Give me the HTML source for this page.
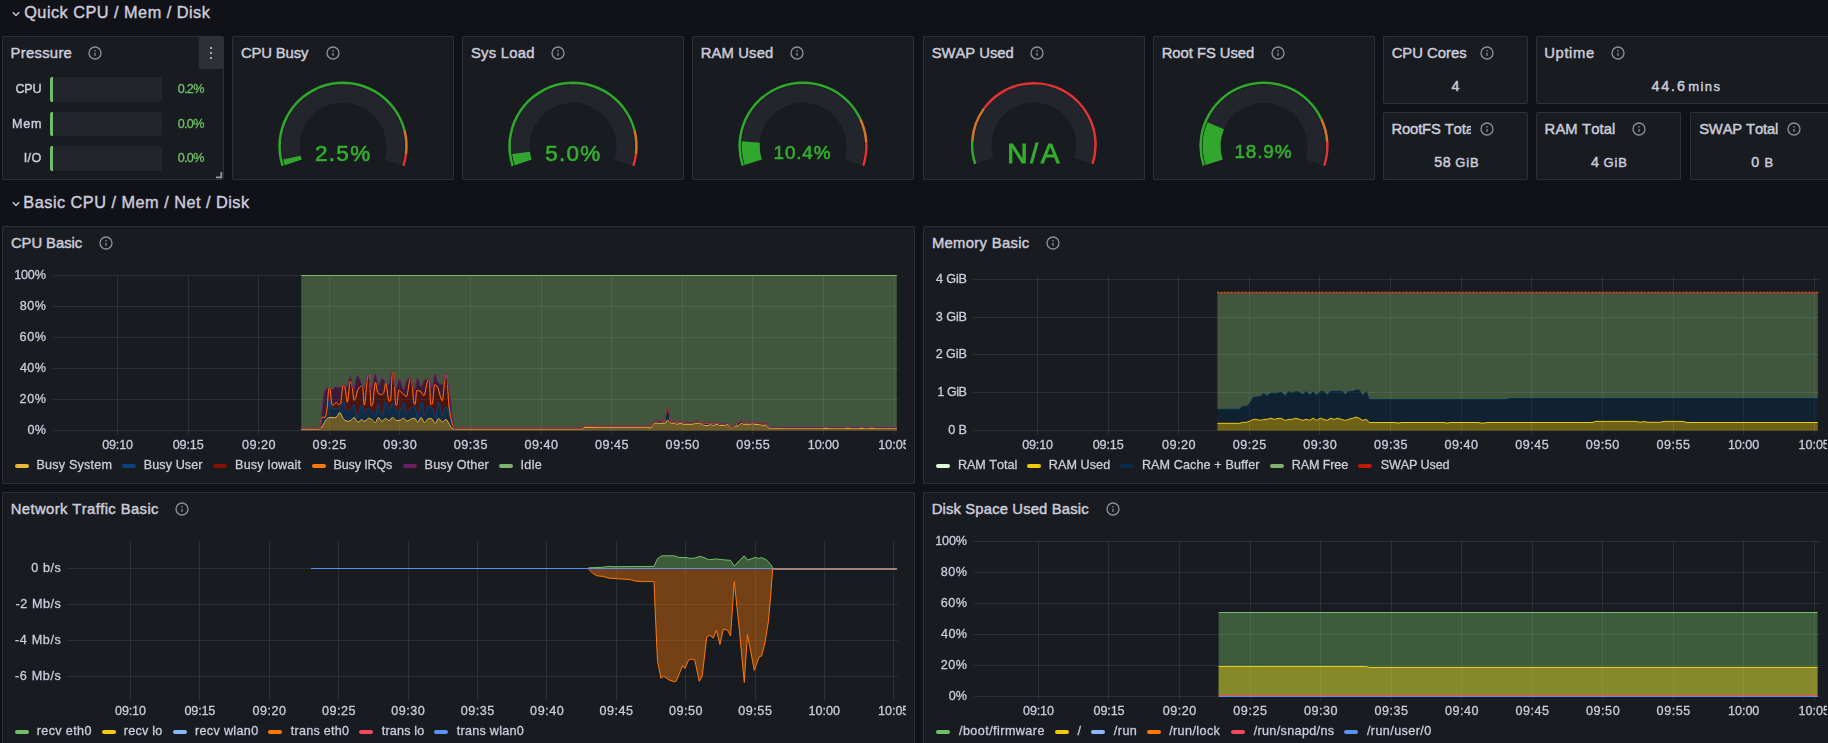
<!DOCTYPE html>
<html lang="en"><head><meta charset="utf-8"><title>Node Exporter Full - Grafana</title>
<style>
html,body{margin:0;padding:0;background:#111217;}
body{width:1828px;height:743px;overflow:hidden;position:relative;font-family:"Liberation Sans",sans-serif;font-kerning:none;}
.panel{position:absolute;box-sizing:border-box;background:#181b1f;border:1px solid rgba(204,204,220,0.12);border-radius:2px;}
.t{position:absolute;white-space:nowrap;font-kerning:none;margin:0;font-weight:400;}

.ic,.ov{position:absolute;display:block;}
.ov{left:0;top:0;pointer-events:none;}
.menubtn{position:absolute;background:rgba(204,204,220,0.12);border-radius:2px;}
.dot{position:absolute;width:2.2px;height:2.2px;border-radius:50%;background:rgb(204,204,220);}
.bar{position:absolute;background:#22252b;border-radius:2px;overflow:hidden;}
.tick{position:absolute;left:0;top:0;bottom:0;width:3.3px;background:#73BF69;}
.gl{position:absolute;left:0;top:0;width:1828px;height:743px;will-change:transform;}
.lm{position:absolute;height:4px;width:14px;border-radius:2px;}
</style></head>
<body>
<section class="panel" style="left:2px;top:36px;width:222px;height:144px"><h2 class="t ttl" style="left:7.49px;top:8px;font-size:14.80px;line-height:16px;color:rgb(204,204,220);letter-spacing:0.307px;-webkit-text-stroke:0.45px rgb(204,204,220);">Pressure</h2><svg class="ic" style="left:84.00px;top:8.00px" width="16" height="16" viewBox="0 0 24 24"><path fill="rgb(204,204,220)" fill-opacity="0.65" d="M12,2A10,10,0,1,0,22,12,10,10,0,0,0,12,2Zm0,18a8,8,0,1,1,8-8A8,8,0,0,1,12,20Zm0-8.5a1,1,0,0,0-1,1v3a1,1,0,0,0,2,0v-3A1,1,0,0,0,12,11.5Zm0-4a1.25,1.25,0,1,0,1.25,1.25A1.25,1.25,0,0,0,12,7.5Z"/></svg></section>
<section class="panel" style="left:232px;top:36px;width:222px;height:144px"><h2 class="t ttl" style="left:7.90px;top:8px;font-size:14.80px;line-height:16px;color:rgb(204,204,220);letter-spacing:-0.119px;-webkit-text-stroke:0.45px rgb(204,204,220);">CPU Busy</h2><svg class="ic" style="left:91.75px;top:8.00px" width="16" height="16" viewBox="0 0 24 24"><path fill="rgb(204,204,220)" fill-opacity="0.65" d="M12,2A10,10,0,1,0,22,12,10,10,0,0,0,12,2Zm0,18a8,8,0,1,1,8-8A8,8,0,0,1,12,20Zm0-8.5a1,1,0,0,0-1,1v3a1,1,0,0,0,2,0v-3A1,1,0,0,0,12,11.5Zm0-4a1.25,1.25,0,1,0,1.25,1.25A1.25,1.25,0,0,0,12,7.5Z"/></svg></section>
<section class="panel" style="left:462px;top:36px;width:222px;height:144px"><h2 class="t ttl" style="left:7.98px;top:8px;font-size:14.80px;line-height:16px;color:rgb(204,204,220);letter-spacing:0.260px;-webkit-text-stroke:0.45px rgb(204,204,220);">Sys Load</h2><svg class="ic" style="left:86.75px;top:8.00px" width="16" height="16" viewBox="0 0 24 24"><path fill="rgb(204,204,220)" fill-opacity="0.65" d="M12,2A10,10,0,1,0,22,12,10,10,0,0,0,12,2Zm0,18a8,8,0,1,1,8-8A8,8,0,0,1,12,20Zm0-8.5a1,1,0,0,0-1,1v3a1,1,0,0,0,2,0v-3A1,1,0,0,0,12,11.5Zm0-4a1.25,1.25,0,1,0,1.25,1.25A1.25,1.25,0,0,0,12,7.5Z"/></svg></section>
<section class="panel" style="left:692px;top:36px;width:222px;height:144px"><h2 class="t ttl" style="left:7.69px;top:8px;font-size:14.80px;line-height:16px;color:rgb(204,204,220);letter-spacing:0.145px;-webkit-text-stroke:0.45px rgb(204,204,220);">RAM Used</h2><svg class="ic" style="left:96.00px;top:8.00px" width="16" height="16" viewBox="0 0 24 24"><path fill="rgb(204,204,220)" fill-opacity="0.65" d="M12,2A10,10,0,1,0,22,12,10,10,0,0,0,12,2Zm0,18a8,8,0,1,1,8-8A8,8,0,0,1,12,20Zm0-8.5a1,1,0,0,0-1,1v3a1,1,0,0,0,2,0v-3A1,1,0,0,0,12,11.5Zm0-4a1.25,1.25,0,1,0,1.25,1.25A1.25,1.25,0,0,0,12,7.5Z"/></svg></section>
<section class="panel" style="left:923px;top:36px;width:222px;height:144px"><h2 class="t ttl" style="left:7.73px;top:8px;font-size:14.80px;line-height:16px;color:rgb(204,204,220);letter-spacing:-0.027px;-webkit-text-stroke:0.45px rgb(204,204,220);">SWAP Used</h2><svg class="ic" style="left:105.00px;top:8.00px" width="16" height="16" viewBox="0 0 24 24"><path fill="rgb(204,204,220)" fill-opacity="0.65" d="M12,2A10,10,0,1,0,22,12,10,10,0,0,0,12,2Zm0,18a8,8,0,1,1,8-8A8,8,0,0,1,12,20Zm0-8.5a1,1,0,0,0-1,1v3a1,1,0,0,0,2,0v-3A1,1,0,0,0,12,11.5Zm0-4a1.25,1.25,0,1,0,1.25,1.25A1.25,1.25,0,0,0,12,7.5Z"/></svg></section>
<section class="panel" style="left:1153px;top:36px;width:222px;height:144px"><h2 class="t ttl" style="left:7.69px;top:8px;font-size:14.80px;line-height:16px;color:rgb(204,204,220);letter-spacing:-0.035px;-webkit-text-stroke:0.45px rgb(204,204,220);">Root FS Used</h2><svg class="ic" style="left:116.00px;top:8.00px" width="16" height="16" viewBox="0 0 24 24"><path fill="rgb(204,204,220)" fill-opacity="0.65" d="M12,2A10,10,0,1,0,22,12,10,10,0,0,0,12,2Zm0,18a8,8,0,1,1,8-8A8,8,0,0,1,12,20Zm0-8.5a1,1,0,0,0-1,1v3a1,1,0,0,0,2,0v-3A1,1,0,0,0,12,11.5Zm0-4a1.25,1.25,0,1,0,1.25,1.25A1.25,1.25,0,0,0,12,7.5Z"/></svg></section>
<section class="panel" style="left:1383px;top:36px;width:145px;height:68px"><h2 class="t ttl" style="left:7.65px;top:8px;font-size:14.80px;line-height:16px;color:rgb(204,204,220);letter-spacing:0.012px;-webkit-text-stroke:0.45px rgb(204,204,220);">CPU Cores</h2><svg class="ic" style="left:95.00px;top:8.00px" width="16" height="16" viewBox="0 0 24 24"><path fill="rgb(204,204,220)" fill-opacity="0.65" d="M12,2A10,10,0,1,0,22,12,10,10,0,0,0,12,2Zm0,18a8,8,0,1,1,8-8A8,8,0,0,1,12,20Zm0-8.5a1,1,0,0,0-1,1v3a1,1,0,0,0,2,0v-3A1,1,0,0,0,12,11.5Zm0-4a1.25,1.25,0,1,0,1.25,1.25A1.25,1.25,0,0,0,12,7.5Z"/></svg></section>
<section class="panel" style="left:1536px;top:36px;width:299px;height:68px"><h2 class="t ttl" style="left:7.26px;top:8px;font-size:14.80px;line-height:16px;color:rgb(204,204,220);letter-spacing:0.614px;-webkit-text-stroke:0.45px rgb(204,204,220);">Uptime</h2><svg class="ic" style="left:73.00px;top:8.00px" width="16" height="16" viewBox="0 0 24 24"><path fill="rgb(204,204,220)" fill-opacity="0.65" d="M12,2A10,10,0,1,0,22,12,10,10,0,0,0,12,2Zm0,18a8,8,0,1,1,8-8A8,8,0,0,1,12,20Zm0-8.5a1,1,0,0,0-1,1v3a1,1,0,0,0,2,0v-3A1,1,0,0,0,12,11.5Zm0-4a1.25,1.25,0,1,0,1.25,1.25A1.25,1.25,0,0,0,12,7.5Z"/></svg></section>
<section class="panel" style="left:1383px;top:112px;width:145px;height:68px"><h2 class="t ttl" style="left:7.44px;top:8px;font-size:14.80px;line-height:16px;color:rgb(204,204,220);letter-spacing:-0.144px;width:80.0px;overflow:hidden;-webkit-text-stroke:0.45px rgb(204,204,220);">RootFS Total</h2><svg class="ic" style="left:95.00px;top:8.00px" width="16" height="16" viewBox="0 0 24 24"><path fill="rgb(204,204,220)" fill-opacity="0.65" d="M12,2A10,10,0,1,0,22,12,10,10,0,0,0,12,2Zm0,18a8,8,0,1,1,8-8A8,8,0,0,1,12,20Zm0-8.5a1,1,0,0,0-1,1v3a1,1,0,0,0,2,0v-3A1,1,0,0,0,12,11.5Zm0-4a1.25,1.25,0,1,0,1.25,1.25A1.25,1.25,0,0,0,12,7.5Z"/></svg></section>
<section class="panel" style="left:1536px;top:112px;width:145px;height:68px"><h2 class="t ttl" style="left:7.59px;top:8px;font-size:14.80px;line-height:16px;color:rgb(204,204,220);letter-spacing:0.113px;-webkit-text-stroke:0.45px rgb(204,204,220);">RAM Total</h2><svg class="ic" style="left:94.00px;top:8.00px" width="16" height="16" viewBox="0 0 24 24"><path fill="rgb(204,204,220)" fill-opacity="0.65" d="M12,2A10,10,0,1,0,22,12,10,10,0,0,0,12,2Zm0,18a8,8,0,1,1,8-8A8,8,0,0,1,12,20Zm0-8.5a1,1,0,0,0-1,1v3a1,1,0,0,0,2,0v-3A1,1,0,0,0,12,11.5Zm0-4a1.25,1.25,0,1,0,1.25,1.25A1.25,1.25,0,0,0,12,7.5Z"/></svg></section>
<section class="panel" style="left:1690px;top:112px;width:145px;height:68px"><h2 class="t ttl" style="left:8.13px;top:8px;font-size:14.80px;line-height:16px;color:rgb(204,204,220);letter-spacing:-0.160px;-webkit-text-stroke:0.45px rgb(204,204,220);">SWAP Total</h2><svg class="ic" style="left:95.00px;top:8.00px" width="16" height="16" viewBox="0 0 24 24"><path fill="rgb(204,204,220)" fill-opacity="0.65" d="M12,2A10,10,0,1,0,22,12,10,10,0,0,0,12,2Zm0,18a8,8,0,1,1,8-8A8,8,0,0,1,12,20Zm0-8.5a1,1,0,0,0-1,1v3a1,1,0,0,0,2,0v-3A1,1,0,0,0,12,11.5Zm0-4a1.25,1.25,0,1,0,1.25,1.25A1.25,1.25,0,0,0,12,7.5Z"/></svg></section>
<section class="panel" style="left:2px;top:226px;width:913px;height:258px"><h2 class="t ttl" style="left:7.90px;top:8px;font-size:14.80px;line-height:16px;color:rgb(204,204,220);letter-spacing:-0.032px;-webkit-text-stroke:0.45px rgb(204,204,220);">CPU Basic</h2><svg class="ic" style="left:94.80px;top:8.00px" width="16" height="16" viewBox="0 0 24 24"><path fill="rgb(204,204,220)" fill-opacity="0.65" d="M12,2A10,10,0,1,0,22,12,10,10,0,0,0,12,2Zm0,18a8,8,0,1,1,8-8A8,8,0,0,1,12,20Zm0-8.5a1,1,0,0,0-1,1v3a1,1,0,0,0,2,0v-3A1,1,0,0,0,12,11.5Zm0-4a1.25,1.25,0,1,0,1.25,1.25A1.25,1.25,0,0,0,12,7.5Z"/></svg></section>
<section class="panel" style="left:923px;top:226px;width:912px;height:258px"><h2 class="t ttl" style="left:7.89px;top:8px;font-size:14.80px;line-height:16px;color:rgb(204,204,220);letter-spacing:0.323px;-webkit-text-stroke:0.45px rgb(204,204,220);">Memory Basic</h2><svg class="ic" style="left:121.00px;top:8.00px" width="16" height="16" viewBox="0 0 24 24"><path fill="rgb(204,204,220)" fill-opacity="0.65" d="M12,2A10,10,0,1,0,22,12,10,10,0,0,0,12,2Zm0,18a8,8,0,1,1,8-8A8,8,0,0,1,12,20Zm0-8.5a1,1,0,0,0-1,1v3a1,1,0,0,0,2,0v-3A1,1,0,0,0,12,11.5Zm0-4a1.25,1.25,0,1,0,1.25,1.25A1.25,1.25,0,0,0,12,7.5Z"/></svg></section>
<section class="panel" style="left:2px;top:492px;width:913px;height:258px"><h2 class="t ttl" style="left:7.69px;top:8px;font-size:14.80px;line-height:16px;color:rgb(204,204,220);letter-spacing:0.400px;-webkit-text-stroke:0.45px rgb(204,204,220);">Network Traffic Basic</h2><svg class="ic" style="left:171.00px;top:8.00px" width="16" height="16" viewBox="0 0 24 24"><path fill="rgb(204,204,220)" fill-opacity="0.65" d="M12,2A10,10,0,1,0,22,12,10,10,0,0,0,12,2Zm0,18a8,8,0,1,1,8-8A8,8,0,0,1,12,20Zm0-8.5a1,1,0,0,0-1,1v3a1,1,0,0,0,2,0v-3A1,1,0,0,0,12,11.5Zm0-4a1.25,1.25,0,1,0,1.25,1.25A1.25,1.25,0,0,0,12,7.5Z"/></svg></section>
<section class="panel" style="left:923px;top:492px;width:912px;height:258px"><h2 class="t ttl" style="left:7.69px;top:8px;font-size:14.80px;line-height:16px;color:rgb(204,204,220);letter-spacing:0.154px;-webkit-text-stroke:0.45px rgb(204,204,220);">Disk Space Used Basic</h2><svg class="ic" style="left:181.00px;top:8.00px" width="16" height="16" viewBox="0 0 24 24"><path fill="rgb(204,204,220)" fill-opacity="0.65" d="M12,2A10,10,0,1,0,22,12,10,10,0,0,0,12,2Zm0,18a8,8,0,1,1,8-8A8,8,0,0,1,12,20Zm0-8.5a1,1,0,0,0-1,1v3a1,1,0,0,0,2,0v-3A1,1,0,0,0,12,11.5Zm0-4a1.25,1.25,0,1,0,1.25,1.25A1.25,1.25,0,0,0,12,7.5Z"/></svg></section>
<svg class="ic" style="left:7.8px;top:6.1px" width="16" height="16" viewBox="0 0 24 24"><path fill="rgb(204,204,220)" d="M17,9.17a1,1,0,0,0-1.41,0L12,12.71,8.46,9.17a1,1,0,0,0-1.41,0,1,1,0,0,0,0,1.42l4.24,4.24a1,1,0,0,0,1.42,0L17,10.59A1,1,0,0,0,17,9.17Z"/></svg>
<svg class="ic" style="left:7.8px;top:196.1px" width="16" height="16" viewBox="0 0 24 24"><path fill="rgb(204,204,220)" d="M17,9.17a1,1,0,0,0-1.41,0L12,12.71,8.46,9.17a1,1,0,0,0-1.41,0,1,1,0,0,0,0,1.42l4.24,4.24a1,1,0,0,0,1.42,0L17,10.59A1,1,0,0,0,17,9.17Z"/></svg>
<span class="t row" style="left:24.23px;top:3px;font-size:16.30px;line-height:18px;color:rgb(204,204,220);letter-spacing:0.479px;-webkit-text-stroke:0.4px rgb(204,204,220);">Quick CPU / Mem / Disk</span>
<span class="t row" style="left:23.36px;top:193px;font-size:16.30px;line-height:18px;color:rgb(204,204,220);letter-spacing:0.488px;-webkit-text-stroke:0.4px rgb(204,204,220);">Basic CPU / Mem / Net / Disk</span>
<div class="menubtn" style="left:199px;top:37px;width:24px;height:31.5px"></div>
<div class="dot" style="left:209.8px;top:47.2px"></div>
<div class="dot" style="left:209.8px;top:51.9px"></div>
<div class="dot" style="left:209.8px;top:56.6px"></div>
<div class="bar" style="left:50px;top:76.7px;width:111.8px;height:25.1px"><div class="tick"></div></div>
<div class="bar" style="left:50px;top:111.9px;width:111.8px;height:24.0px"><div class="tick"></div></div>
<div class="bar" style="left:50px;top:146.0px;width:111.8px;height:25.1px"><div class="tick"></div></div>
<svg class="ic" style="left:215px;top:171px" width="8" height="8" viewBox="0 0 8 8"><path d="M6.3,1 V6.3 H1" fill="none" stroke="rgb(204,204,220)" stroke-opacity="0.7" stroke-width="1.8"/></svg>
<span class="t " style="left:1451.57px;top:78px;font-size:14.30px;line-height:16px;color:rgb(204,204,220);-webkit-text-stroke:0.45px rgb(204,204,220);">4</span>
<span class="t " style="left:1651.47px;top:78px;font-size:14.30px;line-height:16px;color:rgb(204,204,220);letter-spacing:1.875px;-webkit-text-stroke:0.45px rgb(204,204,220);">44.6</span>
<span class="t " style="left:1688.24px;top:79px;font-size:13.00px;line-height:15px;color:rgb(204,204,220);letter-spacing:1.429px;-webkit-text-stroke:0.45px rgb(204,204,220);">mins</span>
<span class="t " style="left:1434.17px;top:154px;font-size:14.30px;line-height:16px;color:rgb(204,204,220);letter-spacing:0.600px;-webkit-text-stroke:0.45px rgb(204,204,220);">58</span>
<span class="t " style="left:1455.35px;top:155px;font-size:13.00px;line-height:15px;color:rgb(204,204,220);letter-spacing:0.884px;-webkit-text-stroke:0.45px rgb(204,204,220);">GiB</span>
<span class="t " style="left:1590.97px;top:154px;font-size:14.30px;line-height:16px;color:rgb(204,204,220);-webkit-text-stroke:0.45px rgb(204,204,220);">4</span>
<span class="t " style="left:1603.55px;top:155px;font-size:13.00px;line-height:15px;color:rgb(204,204,220);letter-spacing:0.884px;-webkit-text-stroke:0.45px rgb(204,204,220);">GiB</span>
<span class="t " style="left:1751.24px;top:154px;font-size:14.30px;line-height:16px;color:rgb(204,204,220);-webkit-text-stroke:0.45px rgb(204,204,220);">0</span>
<span class="t " style="left:1764.53px;top:155px;font-size:13.00px;line-height:15px;color:rgb(204,204,220);-webkit-text-stroke:0.45px rgb(204,204,220);">B</span>
<svg class="ov" width="1828" height="743" viewBox="0 0 1828 743"><path fill="#22252b" d="M284.70,165.14A61.3,61.3,0,1,1,401.30,165.14L384.28,159.61A43.4,43.4,0,1,0,301.72,159.61Z"/><path fill="rgba(50,172,45,0.97)" d="M284.70,165.14A61.3,61.3,0,0,1,283.18,159.57L300.65,155.67A43.4,43.4,0,0,0,301.72,159.61Z"/><path fill="rgba(50,172,45,0.97)" d="M281.47,166.19A64.7,64.7,0,1,1,405.67,130.11L403.25,130.73A62.2,62.2,0,1,0,283.84,165.42Z"/><path fill="rgba(237,129,40,0.89)" d="M405.67,130.11A64.7,64.7,0,0,1,407.19,154.31L404.71,154.00A62.2,62.2,0,0,0,403.25,130.73Z"/><path fill="rgba(245,54,54,0.9)" d="M407.19,154.31A64.7,64.7,0,0,1,404.53,166.19L402.16,165.42A62.2,62.2,0,0,0,404.71,154.00Z"/></svg>
<svg class="ov" width="1828" height="743" viewBox="0 0 1828 743"><path fill="#22252b" d="M514.70,165.14A61.3,61.3,0,1,1,631.30,165.14L614.28,159.61A43.4,43.4,0,1,0,531.72,159.61Z"/><path fill="rgba(50,172,45,0.97)" d="M514.70,165.14A61.3,61.3,0,0,1,512.18,153.88L529.94,151.64A43.4,43.4,0,0,0,531.72,159.61Z"/><path fill="rgba(50,172,45,0.97)" d="M511.47,166.19A64.7,64.7,0,1,1,635.67,130.11L633.25,130.73A62.2,62.2,0,1,0,513.84,165.42Z"/><path fill="rgba(237,129,40,0.89)" d="M635.67,130.11A64.7,64.7,0,0,1,637.19,154.31L634.71,154.00A62.2,62.2,0,0,0,633.25,130.73Z"/><path fill="rgba(245,54,54,0.9)" d="M637.19,154.31A64.7,64.7,0,0,1,634.53,166.19L632.16,165.42A62.2,62.2,0,0,0,634.71,154.00Z"/></svg>
<svg class="ov" width="1828" height="743" viewBox="0 0 1828 743"><path fill="#22252b" d="M744.70,165.04A61.3,61.3,0,1,1,861.30,165.04L844.28,159.51A43.4,43.4,0,1,0,761.72,159.51Z"/><path fill="rgba(50,172,45,0.97)" d="M744.70,165.04A61.3,61.3,0,0,1,741.89,141.33L759.73,142.72A43.4,43.4,0,0,0,761.72,159.51Z"/><path fill="rgba(50,172,45,0.97)" d="M741.56,166.06A64.6,64.6,0,0,1,861.45,118.59L859.19,119.66A62.099999999999994,62.099999999999994,0,0,0,743.94,165.29Z"/><path fill="rgba(237,129,40,0.89)" d="M861.45,118.59A64.6,64.6,0,0,1,867.47,142.04L864.98,142.20A62.099999999999994,62.099999999999994,0,0,0,859.19,119.66Z"/><path fill="rgba(245,54,54,0.9)" d="M867.47,142.04A64.6,64.6,0,0,1,864.44,166.06L862.06,165.29A62.099999999999994,62.099999999999994,0,0,0,864.98,142.20Z"/></svg>
<svg class="ov" width="1828" height="743" viewBox="0 0 1828 743"><path fill="#22252b" d="M976.79,163.44A60.0,60.0,0,1,1,1090.91,163.44L1074.08,157.97A42.3,42.3,0,1,0,993.62,157.97Z"/><path fill="rgba(50,172,45,0.97)" d="M973.98,164.35A62.95,62.95,0,0,1,971.02,140.95L973.52,141.10A60.45,60.45,0,0,0,976.36,163.58Z"/><path fill="rgba(237,129,40,0.89)" d="M971.02,140.95A62.95,62.95,0,0,1,982.92,107.90L984.94,109.37A60.45,60.45,0,0,0,973.52,141.10Z"/><path fill="rgba(245,54,54,0.9)" d="M982.92,107.90A62.95,62.95,0,0,1,1093.72,164.35L1091.34,163.58A60.45,60.45,0,0,0,984.94,109.37Z"/></svg>
<svg class="ov" width="1828" height="743" viewBox="0 0 1828 743"><path fill="#22252b" d="M1205.70,165.04A61.3,61.3,0,1,1,1322.30,165.04L1305.28,159.51A43.4,43.4,0,1,0,1222.72,159.51Z"/><path fill="rgba(50,172,45,0.97)" d="M1205.70,165.04A61.3,61.3,0,0,1,1207.50,122.32L1224.00,129.27A43.4,43.4,0,0,0,1222.72,159.51Z"/><path fill="rgba(50,172,45,0.97)" d="M1202.56,166.06A64.6,64.6,0,0,1,1322.45,118.59L1320.19,119.66A62.099999999999994,62.099999999999994,0,0,0,1204.94,165.29Z"/><path fill="rgba(237,129,40,0.89)" d="M1322.45,118.59A64.6,64.6,0,0,1,1328.47,142.04L1325.98,142.20A62.099999999999994,62.099999999999994,0,0,0,1320.19,119.66Z"/><path fill="rgba(245,54,54,0.9)" d="M1328.47,142.04A64.6,64.6,0,0,1,1325.44,166.06L1323.06,165.29A62.099999999999994,62.099999999999994,0,0,0,1325.98,142.20Z"/></svg>
<svg class="ov" width="1828" height="743" viewBox="0 0 1828 743"><g stroke="rgba(240,250,255,0.09)" stroke-width="1" shape-rendering="crispEdges"><path d="M117.5,275.0V435.0"/><path d="M188.5,275.0V435.0"/><path d="M258.5,275.0V435.0"/><path d="M329.5,275.0V435.0"/><path d="M399.5,275.0V435.0"/><path d="M470.5,275.0V435.0"/><path d="M541.5,275.0V435.0"/><path d="M611.5,275.0V435.0"/><path d="M682.5,275.0V435.0"/><path d="M752.5,275.0V435.0"/><path d="M823.5,275.0V435.0"/><path d="M894.5,275.0V435.0"/><path d="M52.9,275.5H898.3"/><path d="M52.9,306.5H898.3"/><path d="M52.9,337.5H898.3"/><path d="M52.9,368.5H898.3"/><path d="M52.9,399.5H898.3"/><path d="M52.9,430.5H898.3"/></g><g fill-opacity="0.4" stroke="none"><path fill="#EAB839" d="M301.20,429.00C306.80,429.00,312.40,429.00,318.00,429.00C318.58,429.00,319.16,428.94,319.74,428.86C321.03,428.69,322.32,425.82,323.62,424.02C324.75,422.44,325.88,419.44,327.01,418.69C327.98,418.04,328.95,417.43,329.91,417.43C331.53,417.43,333.14,417.72,334.76,417.72C335.57,417.72,336.37,416.97,337.18,416.26C337.99,415.56,338.80,412.39,339.60,412.39C340.41,412.39,341.22,414.97,342.03,416.26C342.83,417.56,343.64,419.71,344.45,420.14C345.74,420.83,347.03,421.30,348.33,421.30C349.46,421.30,350.59,420.39,351.72,419.66C352.52,419.13,353.33,417.43,354.14,417.43C354.95,417.43,355.75,420.28,356.56,421.11C357.05,421.60,357.53,422.27,358.02,422.27C359.15,422.27,360.28,419.66,361.41,419.66C362.54,419.66,363.67,421.30,364.80,421.30C366.09,421.30,367.38,418.20,368.67,418.20C369.97,418.20,371.26,419.32,372.55,420.14C373.52,420.75,374.49,422.56,375.46,422.56C376.43,422.56,377.40,417.43,378.36,417.43C379.49,417.43,380.63,421.11,381.76,421.11C383.07,421.11,384.38,418.69,385.69,418.69C386.82,418.69,387.95,420.62,389.08,420.62C390.21,420.62,391.34,417.43,392.47,417.43C393.76,417.43,395.06,420.62,396.35,420.62C397.64,420.62,398.93,420.41,400.22,420.14C401.36,419.90,402.49,418.20,403.62,418.20C404.75,418.20,405.88,421.30,407.01,421.30C408.30,421.30,409.59,419.61,410.88,419.17C412.18,418.73,413.47,418.20,414.76,418.20C415.73,418.20,416.70,422.56,417.67,422.56C418.80,422.56,419.93,417.43,421.06,417.43C422.19,417.43,423.32,422.56,424.45,422.56C425.74,422.56,427.03,418.69,428.33,418.69C429.46,418.69,430.59,418.69,431.72,418.69C432.85,418.69,433.98,423.53,435.11,423.53C436.24,423.53,437.37,418.40,438.50,418.40C439.79,418.40,441.08,422.08,442.38,422.08C443.51,422.08,444.64,419.36,445.77,419.36C446.74,419.36,447.71,421.65,448.67,423.05C449.64,424.44,450.61,427.27,451.58,427.89C452.55,428.52,453.52,429.05,454.49,429.05C455.66,429.05,456.83,428.90,458.00,428.90C499.67,428.90,541.33,428.90,583.00,428.90C583.50,428.90,584.00,427.41,584.50,427.40C589.50,427.31,594.50,427.38,599.50,427.30C599.67,427.30,599.83,427.26,600.00,427.26C614.77,427.26,629.54,427.26,644.31,427.26C644.97,427.26,645.62,427.07,646.28,427.07C647.26,427.07,648.25,427.76,649.23,427.76C649.89,427.76,650.54,427.68,651.20,427.56C652.02,427.41,652.84,424.89,653.66,424.31C654.48,423.73,655.30,423.13,656.12,423.13C657.11,423.13,658.09,423.32,659.08,423.32C661.05,423.32,663.02,423.32,664.99,423.32C665.81,423.32,666.63,420.37,667.45,420.37C667.94,420.37,668.43,420.98,668.92,421.35C669.58,421.85,670.24,423.06,670.89,423.13C672.21,423.27,673.52,423.19,674.83,423.32C675.49,423.39,676.15,424.31,676.80,424.31C678.11,424.31,679.43,423.32,680.74,423.32C681.73,423.32,682.71,424.31,683.69,424.31C686.65,424.31,689.60,424.31,692.56,424.31C693.54,424.31,694.53,423.32,695.51,423.32C696.82,423.32,698.14,423.32,699.45,423.32C700.43,423.32,701.42,424.15,702.40,424.51C703.39,424.86,704.37,425.49,705.36,425.49C706.34,425.49,707.33,425.49,708.31,425.49C708.97,425.49,709.62,424.31,710.28,424.31C711.26,424.31,712.25,425.49,713.23,425.49C714.55,425.49,715.86,424.31,717.17,424.31C717.99,424.31,718.81,425.49,719.63,425.49C721.44,425.49,723.24,425.42,725.05,425.29C726.03,425.22,727.02,424.31,728.00,424.31C728.99,424.31,729.97,428.25,730.96,428.25C732.27,428.25,733.58,426.60,734.90,426.28C735.88,426.04,736.86,426.05,737.85,425.79C739.00,425.48,740.15,423.32,741.30,423.32C742.12,423.32,742.94,424.31,743.76,424.31C746.05,424.31,748.35,424.31,750.65,424.31C751.31,424.31,751.96,423.52,752.62,423.52C753.28,423.52,753.93,424.51,754.59,424.51C756.23,424.51,757.87,424.31,759.51,424.31C760.17,424.31,760.82,425.29,761.48,425.29C762.79,425.29,764.11,425.10,765.42,425.10C766.73,425.10,768.05,428.19,769.36,428.25C772.90,428.40,776.45,428.44,779.99,428.44C780.33,428.44,780.66,428.40,781.00,428.40C819.60,428.40,858.20,428.40,896.80,428.40L896.80,430.40C698.27,430.40,499.73,430.40,301.20,430.40Z"/><path fill="#0A437C" d="M301.20,428.35C306.80,428.35,312.40,428.35,318.00,428.35C318.58,428.35,319.16,428.67,319.74,428.67C320.55,428.67,321.36,421.25,322.16,420.14C323.13,418.81,324.10,419.00,325.07,417.72C325.72,416.86,326.36,414.79,327.01,412.39C327.82,409.38,328.62,397.85,329.43,397.85C330.08,397.85,330.72,407.16,331.37,407.54C332.50,408.21,333.63,408.21,334.76,408.51C336.05,408.86,337.34,409.48,338.64,409.48C339.44,409.48,340.25,406.97,341.06,405.60C341.87,404.24,342.67,401.24,343.48,401.24C344.29,401.24,345.10,408.43,345.90,409.48C346.71,410.53,347.52,411.42,348.33,411.42C349.29,411.42,350.26,410.40,351.23,409.48C352.20,408.56,353.17,404.64,354.14,404.64C354.95,404.64,355.75,418.20,356.56,418.20C357.37,418.20,358.18,414.60,358.98,412.39C359.79,410.17,360.60,404.64,361.41,404.64C362.21,404.64,363.02,412.39,363.83,412.39C364.80,412.39,365.77,409.97,366.74,409.48C367.71,409.00,368.67,408.51,369.64,408.51C370.94,408.51,372.23,412.34,373.52,413.36C374.33,413.99,375.13,414.81,375.94,414.81C376.75,414.81,377.56,403.18,378.36,403.18C379.01,403.18,379.66,408.64,380.30,410.45C381.11,412.71,381.92,415.78,382.72,415.78C383.55,415.78,384.38,401.24,385.21,401.24C386.50,401.24,387.79,411.42,389.08,411.42C390.21,411.42,391.34,403.18,392.47,403.18C393.76,403.18,395.06,409.74,396.35,410.45C397.32,410.98,398.29,411.42,399.26,411.42C400.71,411.42,402.16,403.18,403.62,403.18C404.59,403.18,405.55,413.36,406.52,413.36C407.98,413.36,409.43,409.05,410.88,408.03C412.18,407.12,413.47,406.09,414.76,406.09C415.73,406.09,416.70,418.20,417.67,418.20C418.96,418.20,420.25,402.21,421.54,402.21C422.51,402.21,423.48,415.78,424.45,415.78C425.74,415.78,427.03,405.60,428.33,405.60C429.46,405.60,430.59,406.50,431.72,407.54C433.01,408.74,434.30,417.72,435.59,417.72C436.56,417.72,437.53,402.21,438.50,402.21C439.79,402.21,441.08,415.78,442.38,415.78C443.51,415.78,444.64,407.06,445.77,407.06C446.57,407.06,447.38,408.85,448.19,410.45C449.32,412.69,450.45,420.13,451.58,423.05C452.55,425.55,453.52,428.86,454.49,428.86C455.66,428.86,456.83,428.30,458.00,428.30C499.50,428.30,541.00,428.30,582.50,428.30C583.17,428.30,583.83,426.42,584.50,426.40C585.50,426.36,586.50,426.36,587.50,426.35C591.50,426.30,595.50,426.25,599.50,426.25C599.67,426.25,599.83,426.43,600.00,426.43C614.44,426.43,628.88,426.43,643.32,426.43C644.31,426.43,645.29,426.29,646.28,426.29C647.26,426.29,648.25,426.62,649.23,426.62C649.89,426.62,650.54,426.55,651.20,426.43C652.02,426.28,652.84,423.91,653.66,423.14C654.48,422.37,655.30,421.56,656.12,421.37C657.11,421.14,658.09,420.97,659.08,420.97C661.05,420.97,663.02,421.66,664.99,421.66C665.38,421.66,665.77,410.91,666.17,410.34C666.59,409.72,667.02,409.35,667.45,409.35C667.87,409.35,668.30,409.77,668.73,410.34C669.29,411.08,669.84,420.76,670.40,421.17C671.88,422.25,673.36,422.65,674.83,422.65C676.80,422.65,678.77,422.35,680.74,422.35C682.05,422.35,683.37,423.34,684.68,423.34C687.30,423.34,689.93,423.34,692.56,423.34C693.70,423.34,694.85,421.17,696.00,421.17C696.82,421.17,697.64,421.25,698.46,421.37C699.45,421.50,700.43,422.96,701.42,423.34C702.40,423.71,703.39,424.12,704.37,424.12C706.01,424.12,707.65,423.14,709.29,423.14C710.28,423.14,711.26,424.12,712.25,424.12C713.89,424.12,715.53,423.34,717.17,423.34C718.48,423.34,719.80,424.32,721.11,424.32C723.41,424.32,725.71,423.47,728.00,423.47C729.15,423.47,730.30,427.61,731.45,427.61C732.93,427.61,734.40,426.06,735.88,425.11C737.69,423.94,739.49,420.97,741.30,420.97C742.44,420.97,743.59,423.14,744.74,423.34C745.73,423.51,746.71,423.63,747.70,423.63C749.17,423.63,750.65,422.65,752.13,422.65C753.28,422.65,754.42,423.63,755.57,423.63C756.89,423.63,758.20,422.15,759.51,422.15C760.50,422.15,761.48,423.91,762.47,424.12C763.78,424.41,765.09,424.32,766.40,424.62C767.55,424.87,768.70,427.61,769.85,427.61C773.23,427.61,776.61,427.61,779.99,427.61C780.33,427.61,780.66,427.65,781.00,427.65C795.17,427.65,809.33,427.65,823.50,427.65C824.23,427.65,824.97,427.50,825.70,427.50C826.47,427.50,827.23,427.65,828.00,427.65C833.83,427.65,839.67,427.65,845.50,427.65C846.27,427.65,847.03,427.50,847.80,427.50C848.53,427.50,849.27,427.65,850.00,427.65C853.17,427.65,856.33,427.65,859.50,427.65C860.20,427.65,860.90,427.50,861.60,427.50C862.40,427.50,863.20,427.65,864.00,427.65C865.93,427.65,867.87,427.65,869.80,427.65C870.50,427.65,871.20,427.50,871.90,427.50C872.60,427.50,873.30,427.65,874.00,427.65C881.60,427.65,889.20,427.65,896.80,427.65L896.80,428.40C858.20,428.40,819.60,428.40,781.00,428.40C780.66,428.40,780.33,428.44,779.99,428.44C776.45,428.44,772.90,428.40,769.36,428.25C768.05,428.19,766.73,425.10,765.42,425.10C764.11,425.10,762.79,425.29,761.48,425.29C760.82,425.29,760.17,424.31,759.51,424.31C757.87,424.31,756.23,424.51,754.59,424.51C753.93,424.51,753.28,423.52,752.62,423.52C751.96,423.52,751.31,424.31,750.65,424.31C748.35,424.31,746.05,424.31,743.76,424.31C742.94,424.31,742.12,423.32,741.30,423.32C740.15,423.32,739.00,425.48,737.85,425.79C736.86,426.05,735.88,426.04,734.90,426.28C733.58,426.60,732.27,428.25,730.96,428.25C729.97,428.25,728.99,424.31,728.00,424.31C727.02,424.31,726.03,425.22,725.05,425.29C723.24,425.42,721.44,425.49,719.63,425.49C718.81,425.49,717.99,424.31,717.17,424.31C715.86,424.31,714.55,425.49,713.23,425.49C712.25,425.49,711.26,424.31,710.28,424.31C709.62,424.31,708.97,425.49,708.31,425.49C707.33,425.49,706.34,425.49,705.36,425.49C704.37,425.49,703.39,424.86,702.40,424.51C701.42,424.15,700.43,423.32,699.45,423.32C698.14,423.32,696.82,423.32,695.51,423.32C694.53,423.32,693.54,424.31,692.56,424.31C689.60,424.31,686.65,424.31,683.69,424.31C682.71,424.31,681.73,423.32,680.74,423.32C679.43,423.32,678.11,424.31,676.80,424.31C676.15,424.31,675.49,423.39,674.83,423.32C673.52,423.19,672.21,423.27,670.89,423.13C670.24,423.06,669.58,421.85,668.92,421.35C668.43,420.98,667.94,420.37,667.45,420.37C666.63,420.37,665.81,423.32,664.99,423.32C663.02,423.32,661.05,423.32,659.08,423.32C658.09,423.32,657.11,423.13,656.12,423.13C655.30,423.13,654.48,423.73,653.66,424.31C652.84,424.89,652.02,427.41,651.20,427.56C650.54,427.68,649.89,427.76,649.23,427.76C648.25,427.76,647.26,427.07,646.28,427.07C645.62,427.07,644.97,427.26,644.31,427.26C629.54,427.26,614.77,427.26,600.00,427.26C599.83,427.26,599.67,427.30,599.50,427.30C594.50,427.38,589.50,427.31,584.50,427.40C584.00,427.41,583.50,428.90,583.00,428.90C541.33,428.90,499.67,428.90,458.00,428.90C456.83,428.90,455.66,429.05,454.49,429.05C453.52,429.05,452.55,428.52,451.58,427.89C450.61,427.27,449.64,424.44,448.67,423.05C447.71,421.65,446.74,419.36,445.77,419.36C444.64,419.36,443.51,422.08,442.38,422.08C441.08,422.08,439.79,418.40,438.50,418.40C437.37,418.40,436.24,423.53,435.11,423.53C433.98,423.53,432.85,418.69,431.72,418.69C430.59,418.69,429.46,418.69,428.33,418.69C427.03,418.69,425.74,422.56,424.45,422.56C423.32,422.56,422.19,417.43,421.06,417.43C419.93,417.43,418.80,422.56,417.67,422.56C416.70,422.56,415.73,418.20,414.76,418.20C413.47,418.20,412.18,418.73,410.88,419.17C409.59,419.61,408.30,421.30,407.01,421.30C405.88,421.30,404.75,418.20,403.62,418.20C402.49,418.20,401.36,419.90,400.22,420.14C398.93,420.41,397.64,420.62,396.35,420.62C395.06,420.62,393.76,417.43,392.47,417.43C391.34,417.43,390.21,420.62,389.08,420.62C387.95,420.62,386.82,418.69,385.69,418.69C384.38,418.69,383.07,421.11,381.76,421.11C380.63,421.11,379.49,417.43,378.36,417.43C377.40,417.43,376.43,422.56,375.46,422.56C374.49,422.56,373.52,420.75,372.55,420.14C371.26,419.32,369.97,418.20,368.67,418.20C367.38,418.20,366.09,421.30,364.80,421.30C363.67,421.30,362.54,419.66,361.41,419.66C360.28,419.66,359.15,422.27,358.02,422.27C357.53,422.27,357.05,421.60,356.56,421.11C355.75,420.28,354.95,417.43,354.14,417.43C353.33,417.43,352.52,419.13,351.72,419.66C350.59,420.39,349.46,421.30,348.33,421.30C347.03,421.30,345.74,420.83,344.45,420.14C343.64,419.71,342.83,417.56,342.03,416.26C341.22,414.97,340.41,412.39,339.60,412.39C338.80,412.39,337.99,415.56,337.18,416.26C336.37,416.97,335.57,417.72,334.76,417.72C333.14,417.72,331.53,417.43,329.91,417.43C328.95,417.43,327.98,418.04,327.01,418.69C325.88,419.44,324.75,422.44,323.62,424.02C322.32,425.82,321.03,428.69,319.74,428.86C319.16,428.94,318.58,429.00,318.00,429.00C312.40,429.00,306.80,429.00,301.20,429.00Z"/><path fill="#890F02" d="M301.20,428.28C306.80,428.28,312.40,428.28,318.00,428.28C318.58,428.28,319.16,428.67,319.74,428.67C320.39,428.67,321.03,417.23,321.68,417.23C322.81,417.23,323.94,417.43,325.07,417.43C325.72,417.43,326.36,412.64,327.01,408.51C327.65,404.38,328.30,388.16,328.95,388.16C329.27,388.16,329.59,388.16,329.91,388.16C330.56,388.16,331.21,404.24,331.85,404.64C332.34,404.93,332.82,405.12,333.31,405.12C334.28,405.12,335.24,402.21,336.21,402.21C337.02,402.21,337.83,404.64,338.64,404.64C339.28,404.64,339.93,404.25,340.57,403.67C341.38,402.93,342.19,385.26,343.00,385.26C343.48,385.26,343.97,385.46,344.45,385.74C345.42,386.30,346.39,402.21,347.36,402.21C348.33,402.21,349.29,381.38,350.26,381.38C350.75,381.38,351.23,382.86,351.72,384.29C352.52,386.66,353.33,400.28,354.14,400.28C354.62,400.28,355.11,398.92,355.59,397.85C356.40,396.07,357.21,390.23,358.02,389.13C359.47,387.15,360.92,385.74,362.38,385.74C363.02,385.74,363.67,405.12,364.31,405.12C365.61,405.12,366.90,374.60,368.19,374.60C368.51,374.60,368.84,374.80,369.16,375.08C369.80,375.65,370.45,406.09,371.10,406.09C371.58,406.09,372.07,405.43,372.55,404.64C373.52,403.06,374.49,382.35,375.46,382.35C376.26,382.35,377.07,392.35,377.88,393.01C379.01,393.93,380.14,394.46,381.27,394.46C382.08,394.46,382.89,393.90,383.69,393.01C384.36,392.27,385.02,382.83,385.69,382.83C386.82,382.83,387.95,401.24,389.08,401.24C389.57,401.24,390.05,401.06,390.53,400.76C391.18,400.36,391.83,371.69,392.47,371.69C392.80,371.69,393.12,371.90,393.44,372.17C394.25,372.86,395.06,405.12,395.86,405.12C396.19,405.12,396.51,405.12,396.83,405.12C397.48,405.12,398.13,390.10,398.77,390.10C399.90,390.10,401.03,392.08,402.16,393.01C403.62,394.20,405.07,396.40,406.52,396.40C407.82,396.40,409.11,378.47,410.40,378.47C410.72,378.47,411.05,378.69,411.37,378.96C412.34,379.76,413.31,404.15,414.28,404.15C414.60,404.15,414.92,404.15,415.24,404.15C415.73,404.15,416.21,390.59,416.70,390.59C417.83,390.59,418.96,390.79,420.09,391.07C421.38,391.39,422.67,395.43,423.97,395.43C425.42,395.43,426.87,379.44,428.33,379.44C428.65,379.44,428.97,379.84,429.29,380.41C429.78,381.27,430.26,404.15,430.75,404.15C431.23,404.15,431.72,404.15,432.20,404.15C433.01,404.15,433.82,384.77,434.62,384.77C435.43,384.77,436.24,385.49,437.05,386.22C438.82,387.84,440.60,400.76,442.38,400.76C442.86,400.76,443.34,392.89,443.83,389.13C444.48,384.12,445.12,374.60,445.77,374.60C446.09,374.60,446.41,374.80,446.74,375.08C447.38,375.65,448.03,396.67,448.67,402.70C449.48,410.23,450.29,415.66,451.10,419.17C451.90,422.68,452.71,425.99,453.52,426.92C454.33,427.85,455.13,428.63,455.94,428.63C456.63,428.63,457.31,428.23,458.00,428.23C499.50,428.23,541.00,428.23,582.50,428.23C583.17,428.23,583.83,425.95,584.50,425.95C585.50,425.95,586.50,426.28,587.50,426.28C591.50,426.28,595.50,426.18,599.50,426.18C599.67,426.18,599.83,426.36,600.00,426.36C614.44,426.36,628.88,426.36,643.32,426.36C644.31,426.36,645.29,425.84,646.28,425.84C647.26,425.84,648.25,426.55,649.23,426.55C649.89,426.55,650.54,426.48,651.20,426.36C652.02,426.21,652.84,423.49,653.66,422.69C654.48,421.89,655.30,421.11,656.12,420.92C657.11,420.69,658.09,420.52,659.08,420.52C661.05,420.52,663.02,421.21,664.99,421.21C665.38,421.21,665.77,410.46,666.17,409.89C666.59,409.27,667.02,408.90,667.45,408.90C667.87,408.90,668.30,409.32,668.73,409.89C669.29,410.63,669.84,420.31,670.40,420.72C671.88,421.80,673.36,422.20,674.83,422.20C676.80,422.20,678.77,421.90,680.74,421.90C682.05,421.90,683.37,422.89,684.68,422.89C687.30,422.89,689.93,422.89,692.56,422.89C693.70,422.89,694.85,420.72,696.00,420.72C696.82,420.72,697.64,420.80,698.46,420.92C699.45,421.05,700.43,422.51,701.42,422.89C702.40,423.26,703.39,423.67,704.37,423.67C706.01,423.67,707.65,422.69,709.29,422.69C710.28,422.69,711.26,423.67,712.25,423.67C713.89,423.67,715.53,422.89,717.17,422.89C718.48,422.89,719.80,423.87,721.11,423.87C723.41,423.87,725.71,423.40,728.00,423.40C729.15,423.40,730.30,427.54,731.45,427.54C732.93,427.54,734.40,425.69,735.88,424.66C737.69,423.39,739.49,420.52,741.30,420.52C742.44,420.52,743.59,422.69,744.74,422.89C745.73,423.06,746.71,423.18,747.70,423.18C749.17,423.18,750.65,422.20,752.13,422.20C753.28,422.20,754.42,423.18,755.57,423.18C756.89,423.18,758.20,421.70,759.51,421.70C760.50,421.70,761.48,423.46,762.47,423.67C763.78,423.96,765.09,423.87,766.40,424.17C767.55,424.43,768.70,427.54,769.85,427.54C773.23,427.54,776.61,427.54,779.99,427.54C780.33,427.54,780.66,427.58,781.00,427.58C795.17,427.58,809.33,427.58,823.50,427.58C824.23,427.58,824.97,427.05,825.70,427.05C826.47,427.05,827.23,427.58,828.00,427.58C833.83,427.58,839.67,427.58,845.50,427.58C846.27,427.58,847.03,427.05,847.80,427.05C848.53,427.05,849.27,427.58,850.00,427.58C853.17,427.58,856.33,427.58,859.50,427.58C860.20,427.58,860.90,427.05,861.60,427.05C862.40,427.05,863.20,427.58,864.00,427.58C865.93,427.58,867.87,427.58,869.80,427.58C870.50,427.58,871.20,427.05,871.90,427.05C872.60,427.05,873.30,427.58,874.00,427.58C881.60,427.58,889.20,427.58,896.80,427.58L896.80,427.65C889.20,427.65,881.60,427.65,874.00,427.65C873.30,427.65,872.60,427.50,871.90,427.50C871.20,427.50,870.50,427.65,869.80,427.65C867.87,427.65,865.93,427.65,864.00,427.65C863.20,427.65,862.40,427.50,861.60,427.50C860.90,427.50,860.20,427.65,859.50,427.65C856.33,427.65,853.17,427.65,850.00,427.65C849.27,427.65,848.53,427.50,847.80,427.50C847.03,427.50,846.27,427.65,845.50,427.65C839.67,427.65,833.83,427.65,828.00,427.65C827.23,427.65,826.47,427.50,825.70,427.50C824.97,427.50,824.23,427.65,823.50,427.65C809.33,427.65,795.17,427.65,781.00,427.65C780.66,427.65,780.33,427.61,779.99,427.61C776.61,427.61,773.23,427.61,769.85,427.61C768.70,427.61,767.55,424.87,766.40,424.62C765.09,424.32,763.78,424.41,762.47,424.12C761.48,423.91,760.50,422.15,759.51,422.15C758.20,422.15,756.89,423.63,755.57,423.63C754.42,423.63,753.28,422.65,752.13,422.65C750.65,422.65,749.17,423.63,747.70,423.63C746.71,423.63,745.73,423.51,744.74,423.34C743.59,423.14,742.44,420.97,741.30,420.97C739.49,420.97,737.69,423.94,735.88,425.11C734.40,426.06,732.93,427.61,731.45,427.61C730.30,427.61,729.15,423.47,728.00,423.47C725.71,423.47,723.41,424.32,721.11,424.32C719.80,424.32,718.48,423.34,717.17,423.34C715.53,423.34,713.89,424.12,712.25,424.12C711.26,424.12,710.28,423.14,709.29,423.14C707.65,423.14,706.01,424.12,704.37,424.12C703.39,424.12,702.40,423.71,701.42,423.34C700.43,422.96,699.45,421.50,698.46,421.37C697.64,421.25,696.82,421.17,696.00,421.17C694.85,421.17,693.70,423.34,692.56,423.34C689.93,423.34,687.30,423.34,684.68,423.34C683.37,423.34,682.05,422.35,680.74,422.35C678.77,422.35,676.80,422.65,674.83,422.65C673.36,422.65,671.88,422.25,670.40,421.17C669.84,420.76,669.29,411.08,668.73,410.34C668.30,409.77,667.87,409.35,667.45,409.35C667.02,409.35,666.59,409.72,666.17,410.34C665.77,410.91,665.38,421.66,664.99,421.66C663.02,421.66,661.05,420.97,659.08,420.97C658.09,420.97,657.11,421.14,656.12,421.37C655.30,421.56,654.48,422.37,653.66,423.14C652.84,423.91,652.02,426.28,651.20,426.43C650.54,426.55,649.89,426.62,649.23,426.62C648.25,426.62,647.26,426.29,646.28,426.29C645.29,426.29,644.31,426.43,643.32,426.43C628.88,426.43,614.44,426.43,600.00,426.43C599.83,426.43,599.67,426.25,599.50,426.25C595.50,426.25,591.50,426.30,587.50,426.35C586.50,426.36,585.50,426.36,584.50,426.40C583.83,426.42,583.17,428.30,582.50,428.30C541.00,428.30,499.50,428.30,458.00,428.30C456.83,428.30,455.66,428.86,454.49,428.86C453.52,428.86,452.55,425.55,451.58,423.05C450.45,420.13,449.32,412.69,448.19,410.45C447.38,408.85,446.57,407.06,445.77,407.06C444.64,407.06,443.51,415.78,442.38,415.78C441.08,415.78,439.79,402.21,438.50,402.21C437.53,402.21,436.56,417.72,435.59,417.72C434.30,417.72,433.01,408.74,431.72,407.54C430.59,406.50,429.46,405.60,428.33,405.60C427.03,405.60,425.74,415.78,424.45,415.78C423.48,415.78,422.51,402.21,421.54,402.21C420.25,402.21,418.96,418.20,417.67,418.20C416.70,418.20,415.73,406.09,414.76,406.09C413.47,406.09,412.18,407.12,410.88,408.03C409.43,409.05,407.98,413.36,406.52,413.36C405.55,413.36,404.59,403.18,403.62,403.18C402.16,403.18,400.71,411.42,399.26,411.42C398.29,411.42,397.32,410.98,396.35,410.45C395.06,409.74,393.76,403.18,392.47,403.18C391.34,403.18,390.21,411.42,389.08,411.42C387.79,411.42,386.50,401.24,385.21,401.24C384.38,401.24,383.55,415.78,382.72,415.78C381.92,415.78,381.11,412.71,380.30,410.45C379.66,408.64,379.01,403.18,378.36,403.18C377.56,403.18,376.75,414.81,375.94,414.81C375.13,414.81,374.33,413.99,373.52,413.36C372.23,412.34,370.94,408.51,369.64,408.51C368.67,408.51,367.71,409.00,366.74,409.48C365.77,409.97,364.80,412.39,363.83,412.39C363.02,412.39,362.21,404.64,361.41,404.64C360.60,404.64,359.79,410.17,358.98,412.39C358.18,414.60,357.37,418.20,356.56,418.20C355.75,418.20,354.95,404.64,354.14,404.64C353.17,404.64,352.20,408.56,351.23,409.48C350.26,410.40,349.29,411.42,348.33,411.42C347.52,411.42,346.71,410.53,345.90,409.48C345.10,408.43,344.29,401.24,343.48,401.24C342.67,401.24,341.87,404.24,341.06,405.60C340.25,406.97,339.44,409.48,338.64,409.48C337.34,409.48,336.05,408.86,334.76,408.51C333.63,408.21,332.50,408.21,331.37,407.54C330.72,407.16,330.08,397.85,329.43,397.85C328.62,397.85,327.82,409.38,327.01,412.39C326.36,414.79,325.72,416.86,325.07,417.72C324.10,419.00,323.13,418.81,322.16,420.14C321.36,421.25,320.55,428.67,319.74,428.67C319.16,428.67,318.58,428.35,318.00,428.35C312.40,428.35,306.80,428.35,301.20,428.35Z"/><path fill="#6D1F62" d="M301.20,428.20C306.80,428.20,312.40,428.20,318.00,428.20C318.58,428.20,319.16,428.38,319.74,428.38C320.55,428.38,321.36,416.66,322.16,410.45C322.97,404.24,323.78,392.51,324.59,391.07C325.39,389.63,326.20,389.11,327.01,388.65C327.82,388.19,328.62,387.68,329.43,387.68C330.40,387.68,331.37,389.62,332.34,389.62C333.47,389.62,334.60,386.71,335.73,386.71C337.02,386.71,338.31,387.68,339.60,387.68C340.90,387.68,342.19,384.77,343.48,384.77C344.77,384.77,346.06,386.71,347.36,386.71C348.33,386.71,349.29,376.53,350.26,376.53C351.39,376.53,352.52,389.62,353.66,389.62C354.79,389.62,355.92,375.57,357.05,375.57C357.85,375.57,358.66,377.21,359.47,378.47C360.92,380.74,362.38,389.13,363.83,389.13C365.28,389.13,366.74,374.40,368.19,374.40C369.16,374.40,370.13,390.10,371.10,390.10C372.55,390.10,374.00,373.63,375.46,373.63C376.43,373.63,377.40,385.26,378.36,385.26C379.66,385.26,380.95,378.47,382.24,378.47C383.39,378.47,384.54,381.84,385.69,382.83C386.66,383.67,387.63,384.77,388.60,384.77C389.89,384.77,391.18,371.01,392.47,371.01C393.60,371.01,394.73,389.62,395.86,389.62C396.99,389.62,398.13,379.44,399.26,379.44C400.71,379.44,402.16,389.62,403.62,389.62C404.75,389.62,405.88,381.22,407.01,379.93C408.14,378.63,409.27,377.50,410.40,377.50C411.69,377.50,412.98,389.62,414.28,389.62C415.41,389.62,416.54,378.47,417.67,378.47C418.80,378.47,419.93,386.71,421.06,386.71C422.19,386.71,423.32,380.59,424.45,379.93C425.90,379.07,427.36,378.47,428.81,378.47C429.78,378.47,430.75,388.16,431.72,388.16C432.91,388.16,434.11,374.11,435.30,374.11C436.21,374.11,437.11,382.14,438.02,382.83C439.63,384.07,441.25,384.77,442.86,384.77C443.83,384.77,444.80,373.43,445.77,373.43C446.57,373.43,447.38,380.78,448.19,385.26C449.00,389.73,449.80,394.41,450.61,400.76C451.26,405.84,451.90,417.20,452.55,420.14C453.52,424.55,454.49,428.29,455.46,428.29C456.30,428.29,457.15,428.15,458.00,428.15C499.50,428.15,541.00,428.15,582.50,428.15C583.17,428.15,583.83,425.60,584.50,425.60C585.50,425.60,586.50,426.20,587.50,426.20C591.50,426.20,595.50,426.10,599.50,426.10C599.67,426.10,599.83,426.28,600.00,426.28C614.44,426.28,628.88,426.28,643.32,426.28C644.31,426.28,645.29,425.49,646.28,425.49C647.26,425.49,648.25,426.47,649.23,426.47C649.89,426.47,650.54,426.40,651.20,426.28C652.02,426.13,652.84,423.15,653.66,422.34C654.48,421.52,655.30,420.76,656.12,420.57C657.11,420.34,658.09,420.17,659.08,420.17C661.05,420.17,663.02,420.86,664.99,420.86C665.38,420.86,665.77,410.11,666.17,409.54C666.59,408.92,667.02,408.55,667.45,408.55C667.87,408.55,668.30,408.97,668.73,409.54C669.29,410.28,669.84,419.96,670.40,420.37C671.88,421.45,673.36,421.85,674.83,421.85C676.80,421.85,678.77,421.55,680.74,421.55C682.05,421.55,683.37,422.54,684.68,422.54C687.30,422.54,689.93,422.54,692.56,422.54C693.70,422.54,694.85,420.37,696.00,420.37C696.82,420.37,697.64,420.45,698.46,420.57C699.45,420.70,700.43,422.16,701.42,422.54C702.40,422.91,703.39,423.32,704.37,423.32C706.01,423.32,707.65,422.34,709.29,422.34C710.28,422.34,711.26,423.32,712.25,423.32C713.89,423.32,715.53,422.54,717.17,422.54C718.48,422.54,719.80,423.52,721.11,423.52C723.41,423.52,725.71,423.32,728.00,423.32C729.15,423.32,730.30,427.46,731.45,427.46C732.93,427.46,734.40,425.40,735.88,424.31C737.69,422.98,739.49,420.17,741.30,420.17C742.44,420.17,743.59,422.34,744.74,422.54C745.73,422.71,746.71,422.83,747.70,422.83C749.17,422.83,750.65,421.85,752.13,421.85C753.28,421.85,754.42,422.83,755.57,422.83C756.89,422.83,758.20,421.35,759.51,421.35C760.50,421.35,761.48,423.11,762.47,423.32C763.78,423.61,765.09,423.52,766.40,423.82C767.55,424.08,768.70,427.46,769.85,427.46C773.23,427.46,776.61,427.46,779.99,427.46C780.33,427.46,780.66,427.50,781.00,427.50C795.17,427.50,809.33,427.50,823.50,427.50C824.23,427.50,824.97,426.70,825.70,426.70C826.47,426.70,827.23,427.50,828.00,427.50C833.83,427.50,839.67,427.50,845.50,427.50C846.27,427.50,847.03,426.70,847.80,426.70C848.53,426.70,849.27,427.50,850.00,427.50C853.17,427.50,856.33,427.50,859.50,427.50C860.20,427.50,860.90,426.70,861.60,426.70C862.40,426.70,863.20,427.50,864.00,427.50C865.93,427.50,867.87,427.50,869.80,427.50C870.50,427.50,871.20,426.70,871.90,426.70C872.60,426.70,873.30,427.50,874.00,427.50C881.60,427.50,889.20,427.50,896.80,427.50L896.80,427.58C889.20,427.58,881.60,427.58,874.00,427.58C873.30,427.58,872.60,427.05,871.90,427.05C871.20,427.05,870.50,427.58,869.80,427.58C867.87,427.58,865.93,427.58,864.00,427.58C863.20,427.58,862.40,427.05,861.60,427.05C860.90,427.05,860.20,427.58,859.50,427.58C856.33,427.58,853.17,427.58,850.00,427.58C849.27,427.58,848.53,427.05,847.80,427.05C847.03,427.05,846.27,427.58,845.50,427.58C839.67,427.58,833.83,427.58,828.00,427.58C827.23,427.58,826.47,427.05,825.70,427.05C824.97,427.05,824.23,427.58,823.50,427.58C809.33,427.58,795.17,427.58,781.00,427.58C780.66,427.58,780.33,427.54,779.99,427.54C776.61,427.54,773.23,427.54,769.85,427.54C768.70,427.54,767.55,424.43,766.40,424.17C765.09,423.87,763.78,423.96,762.47,423.67C761.48,423.46,760.50,421.70,759.51,421.70C758.20,421.70,756.89,423.18,755.57,423.18C754.42,423.18,753.28,422.20,752.13,422.20C750.65,422.20,749.17,423.18,747.70,423.18C746.71,423.18,745.73,423.06,744.74,422.89C743.59,422.69,742.44,420.52,741.30,420.52C739.49,420.52,737.69,423.39,735.88,424.66C734.40,425.69,732.93,427.54,731.45,427.54C730.30,427.54,729.15,423.40,728.00,423.40C725.71,423.40,723.41,423.87,721.11,423.87C719.80,423.87,718.48,422.89,717.17,422.89C715.53,422.89,713.89,423.67,712.25,423.67C711.26,423.67,710.28,422.69,709.29,422.69C707.65,422.69,706.01,423.67,704.37,423.67C703.39,423.67,702.40,423.26,701.42,422.89C700.43,422.51,699.45,421.05,698.46,420.92C697.64,420.80,696.82,420.72,696.00,420.72C694.85,420.72,693.70,422.89,692.56,422.89C689.93,422.89,687.30,422.89,684.68,422.89C683.37,422.89,682.05,421.90,680.74,421.90C678.77,421.90,676.80,422.20,674.83,422.20C673.36,422.20,671.88,421.80,670.40,420.72C669.84,420.31,669.29,410.63,668.73,409.89C668.30,409.32,667.87,408.90,667.45,408.90C667.02,408.90,666.59,409.27,666.17,409.89C665.77,410.46,665.38,421.21,664.99,421.21C663.02,421.21,661.05,420.52,659.08,420.52C658.09,420.52,657.11,420.69,656.12,420.92C655.30,421.11,654.48,421.89,653.66,422.69C652.84,423.49,652.02,426.21,651.20,426.36C650.54,426.48,649.89,426.55,649.23,426.55C648.25,426.55,647.26,425.84,646.28,425.84C645.29,425.84,644.31,426.36,643.32,426.36C628.88,426.36,614.44,426.36,600.00,426.36C599.83,426.36,599.67,426.18,599.50,426.18C595.50,426.18,591.50,426.28,587.50,426.28C586.50,426.28,585.50,425.95,584.50,425.95C583.83,425.95,583.17,428.23,582.50,428.23C541.00,428.23,499.50,428.23,458.00,428.23C457.31,428.23,456.63,428.63,455.94,428.63C455.13,428.63,454.33,427.85,453.52,426.92C452.71,425.99,451.90,422.68,451.10,419.17C450.29,415.66,449.48,410.23,448.67,402.70C448.03,396.67,447.38,375.65,446.74,375.08C446.41,374.80,446.09,374.60,445.77,374.60C445.12,374.60,444.48,384.12,443.83,389.13C443.34,392.89,442.86,400.76,442.38,400.76C440.60,400.76,438.82,387.84,437.05,386.22C436.24,385.49,435.43,384.77,434.62,384.77C433.82,384.77,433.01,404.15,432.20,404.15C431.72,404.15,431.23,404.15,430.75,404.15C430.26,404.15,429.78,381.27,429.29,380.41C428.97,379.84,428.65,379.44,428.33,379.44C426.87,379.44,425.42,395.43,423.97,395.43C422.67,395.43,421.38,391.39,420.09,391.07C418.96,390.79,417.83,390.59,416.70,390.59C416.21,390.59,415.73,404.15,415.24,404.15C414.92,404.15,414.60,404.15,414.28,404.15C413.31,404.15,412.34,379.76,411.37,378.96C411.05,378.69,410.72,378.47,410.40,378.47C409.11,378.47,407.82,396.40,406.52,396.40C405.07,396.40,403.62,394.20,402.16,393.01C401.03,392.08,399.90,390.10,398.77,390.10C398.13,390.10,397.48,405.12,396.83,405.12C396.51,405.12,396.19,405.12,395.86,405.12C395.06,405.12,394.25,372.86,393.44,372.17C393.12,371.90,392.80,371.69,392.47,371.69C391.83,371.69,391.18,400.36,390.53,400.76C390.05,401.06,389.57,401.24,389.08,401.24C387.95,401.24,386.82,382.83,385.69,382.83C385.02,382.83,384.36,392.27,383.69,393.01C382.89,393.90,382.08,394.46,381.27,394.46C380.14,394.46,379.01,393.93,377.88,393.01C377.07,392.35,376.26,382.35,375.46,382.35C374.49,382.35,373.52,403.06,372.55,404.64C372.07,405.43,371.58,406.09,371.10,406.09C370.45,406.09,369.80,375.65,369.16,375.08C368.84,374.80,368.51,374.60,368.19,374.60C366.90,374.60,365.61,405.12,364.31,405.12C363.67,405.12,363.02,385.74,362.38,385.74C360.92,385.74,359.47,387.15,358.02,389.13C357.21,390.23,356.40,396.07,355.59,397.85C355.11,398.92,354.62,400.28,354.14,400.28C353.33,400.28,352.52,386.66,351.72,384.29C351.23,382.86,350.75,381.38,350.26,381.38C349.29,381.38,348.33,402.21,347.36,402.21C346.39,402.21,345.42,386.30,344.45,385.74C343.97,385.46,343.48,385.26,343.00,385.26C342.19,385.26,341.38,402.93,340.57,403.67C339.93,404.25,339.28,404.64,338.64,404.64C337.83,404.64,337.02,402.21,336.21,402.21C335.24,402.21,334.28,405.12,333.31,405.12C332.82,405.12,332.34,404.93,331.85,404.64C331.21,404.24,330.56,388.16,329.91,388.16C329.59,388.16,329.27,388.16,328.95,388.16C328.30,388.16,327.65,404.38,327.01,408.51C326.36,412.64,325.72,417.43,325.07,417.43C323.94,417.43,322.81,417.23,321.68,417.23C321.03,417.23,320.39,428.67,319.74,428.67C319.16,428.67,318.58,428.28,318.00,428.28C312.40,428.28,306.80,428.28,301.20,428.28Z"/><path fill="#7EB26D" d="M301.2,275.4H896.8V427.50L896.80,427.50C889.20,427.50,881.60,427.50,874.00,427.50C873.30,427.50,872.60,426.70,871.90,426.70C871.20,426.70,870.50,427.50,869.80,427.50C867.87,427.50,865.93,427.50,864.00,427.50C863.20,427.50,862.40,426.70,861.60,426.70C860.90,426.70,860.20,427.50,859.50,427.50C856.33,427.50,853.17,427.50,850.00,427.50C849.27,427.50,848.53,426.70,847.80,426.70C847.03,426.70,846.27,427.50,845.50,427.50C839.67,427.50,833.83,427.50,828.00,427.50C827.23,427.50,826.47,426.70,825.70,426.70C824.97,426.70,824.23,427.50,823.50,427.50C809.33,427.50,795.17,427.50,781.00,427.50C780.66,427.50,780.33,427.46,779.99,427.46C776.61,427.46,773.23,427.46,769.85,427.46C768.70,427.46,767.55,424.08,766.40,423.82C765.09,423.52,763.78,423.61,762.47,423.32C761.48,423.11,760.50,421.35,759.51,421.35C758.20,421.35,756.89,422.83,755.57,422.83C754.42,422.83,753.28,421.85,752.13,421.85C750.65,421.85,749.17,422.83,747.70,422.83C746.71,422.83,745.73,422.71,744.74,422.54C743.59,422.34,742.44,420.17,741.30,420.17C739.49,420.17,737.69,422.98,735.88,424.31C734.40,425.40,732.93,427.46,731.45,427.46C730.30,427.46,729.15,423.32,728.00,423.32C725.71,423.32,723.41,423.52,721.11,423.52C719.80,423.52,718.48,422.54,717.17,422.54C715.53,422.54,713.89,423.32,712.25,423.32C711.26,423.32,710.28,422.34,709.29,422.34C707.65,422.34,706.01,423.32,704.37,423.32C703.39,423.32,702.40,422.91,701.42,422.54C700.43,422.16,699.45,420.70,698.46,420.57C697.64,420.45,696.82,420.37,696.00,420.37C694.85,420.37,693.70,422.54,692.56,422.54C689.93,422.54,687.30,422.54,684.68,422.54C683.37,422.54,682.05,421.55,680.74,421.55C678.77,421.55,676.80,421.85,674.83,421.85C673.36,421.85,671.88,421.45,670.40,420.37C669.84,419.96,669.29,410.28,668.73,409.54C668.30,408.97,667.87,408.55,667.45,408.55C667.02,408.55,666.59,408.92,666.17,409.54C665.77,410.11,665.38,420.86,664.99,420.86C663.02,420.86,661.05,420.17,659.08,420.17C658.09,420.17,657.11,420.34,656.12,420.57C655.30,420.76,654.48,421.52,653.66,422.34C652.84,423.15,652.02,426.13,651.20,426.28C650.54,426.40,649.89,426.47,649.23,426.47C648.25,426.47,647.26,425.49,646.28,425.49C645.29,425.49,644.31,426.28,643.32,426.28C628.88,426.28,614.44,426.28,600.00,426.28C599.83,426.28,599.67,426.10,599.50,426.10C595.50,426.10,591.50,426.20,587.50,426.20C586.50,426.20,585.50,425.60,584.50,425.60C583.83,425.60,583.17,428.15,582.50,428.15C541.00,428.15,499.50,428.15,458.00,428.15C457.15,428.15,456.30,428.29,455.46,428.29C454.49,428.29,453.52,424.55,452.55,420.14C451.90,417.20,451.26,405.84,450.61,400.76C449.80,394.41,449.00,389.73,448.19,385.26C447.38,380.78,446.57,373.43,445.77,373.43C444.80,373.43,443.83,384.77,442.86,384.77C441.25,384.77,439.63,384.07,438.02,382.83C437.11,382.14,436.21,374.11,435.30,374.11C434.11,374.11,432.91,388.16,431.72,388.16C430.75,388.16,429.78,378.47,428.81,378.47C427.36,378.47,425.90,379.07,424.45,379.93C423.32,380.59,422.19,386.71,421.06,386.71C419.93,386.71,418.80,378.47,417.67,378.47C416.54,378.47,415.41,389.62,414.28,389.62C412.98,389.62,411.69,377.50,410.40,377.50C409.27,377.50,408.14,378.63,407.01,379.93C405.88,381.22,404.75,389.62,403.62,389.62C402.16,389.62,400.71,379.44,399.26,379.44C398.13,379.44,396.99,389.62,395.86,389.62C394.73,389.62,393.60,371.01,392.47,371.01C391.18,371.01,389.89,384.77,388.60,384.77C387.63,384.77,386.66,383.67,385.69,382.83C384.54,381.84,383.39,378.47,382.24,378.47C380.95,378.47,379.66,385.26,378.36,385.26C377.40,385.26,376.43,373.63,375.46,373.63C374.00,373.63,372.55,390.10,371.10,390.10C370.13,390.10,369.16,374.40,368.19,374.40C366.74,374.40,365.28,389.13,363.83,389.13C362.38,389.13,360.92,380.74,359.47,378.47C358.66,377.21,357.85,375.57,357.05,375.57C355.92,375.57,354.79,389.62,353.66,389.62C352.52,389.62,351.39,376.53,350.26,376.53C349.29,376.53,348.33,386.71,347.36,386.71C346.06,386.71,344.77,384.77,343.48,384.77C342.19,384.77,340.90,387.68,339.60,387.68C338.31,387.68,337.02,386.71,335.73,386.71C334.60,386.71,333.47,389.62,332.34,389.62C331.37,389.62,330.40,387.68,329.43,387.68C328.62,387.68,327.82,388.19,327.01,388.65C326.20,389.11,325.39,389.63,324.59,391.07C323.78,392.51,322.97,404.24,322.16,410.45C321.36,416.66,320.55,428.38,319.74,428.38C319.16,428.38,318.58,428.20,318.00,428.20C312.40,428.20,306.80,428.20,301.20,428.20Z"/></g><g fill="none" stroke-width="1" stroke-linejoin="round"><path stroke="#EAB839" d="M301.20,429.00C306.80,429.00,312.40,429.00,318.00,429.00C318.58,429.00,319.16,428.94,319.74,428.86C321.03,428.69,322.32,425.82,323.62,424.02C324.75,422.44,325.88,419.44,327.01,418.69C327.98,418.04,328.95,417.43,329.91,417.43C331.53,417.43,333.14,417.72,334.76,417.72C335.57,417.72,336.37,416.97,337.18,416.26C337.99,415.56,338.80,412.39,339.60,412.39C340.41,412.39,341.22,414.97,342.03,416.26C342.83,417.56,343.64,419.71,344.45,420.14C345.74,420.83,347.03,421.30,348.33,421.30C349.46,421.30,350.59,420.39,351.72,419.66C352.52,419.13,353.33,417.43,354.14,417.43C354.95,417.43,355.75,420.28,356.56,421.11C357.05,421.60,357.53,422.27,358.02,422.27C359.15,422.27,360.28,419.66,361.41,419.66C362.54,419.66,363.67,421.30,364.80,421.30C366.09,421.30,367.38,418.20,368.67,418.20C369.97,418.20,371.26,419.32,372.55,420.14C373.52,420.75,374.49,422.56,375.46,422.56C376.43,422.56,377.40,417.43,378.36,417.43C379.49,417.43,380.63,421.11,381.76,421.11C383.07,421.11,384.38,418.69,385.69,418.69C386.82,418.69,387.95,420.62,389.08,420.62C390.21,420.62,391.34,417.43,392.47,417.43C393.76,417.43,395.06,420.62,396.35,420.62C397.64,420.62,398.93,420.41,400.22,420.14C401.36,419.90,402.49,418.20,403.62,418.20C404.75,418.20,405.88,421.30,407.01,421.30C408.30,421.30,409.59,419.61,410.88,419.17C412.18,418.73,413.47,418.20,414.76,418.20C415.73,418.20,416.70,422.56,417.67,422.56C418.80,422.56,419.93,417.43,421.06,417.43C422.19,417.43,423.32,422.56,424.45,422.56C425.74,422.56,427.03,418.69,428.33,418.69C429.46,418.69,430.59,418.69,431.72,418.69C432.85,418.69,433.98,423.53,435.11,423.53C436.24,423.53,437.37,418.40,438.50,418.40C439.79,418.40,441.08,422.08,442.38,422.08C443.51,422.08,444.64,419.36,445.77,419.36C446.74,419.36,447.71,421.65,448.67,423.05C449.64,424.44,450.61,427.27,451.58,427.89C452.55,428.52,453.52,429.05,454.49,429.05C455.66,429.05,456.83,428.90,458.00,428.90C499.67,428.90,541.33,428.90,583.00,428.90C583.50,428.90,584.00,427.41,584.50,427.40C589.50,427.31,594.50,427.38,599.50,427.30C599.67,427.30,599.83,427.26,600.00,427.26C614.77,427.26,629.54,427.26,644.31,427.26C644.97,427.26,645.62,427.07,646.28,427.07C647.26,427.07,648.25,427.76,649.23,427.76C649.89,427.76,650.54,427.68,651.20,427.56C652.02,427.41,652.84,424.89,653.66,424.31C654.48,423.73,655.30,423.13,656.12,423.13C657.11,423.13,658.09,423.32,659.08,423.32C661.05,423.32,663.02,423.32,664.99,423.32C665.81,423.32,666.63,420.37,667.45,420.37C667.94,420.37,668.43,420.98,668.92,421.35C669.58,421.85,670.24,423.06,670.89,423.13C672.21,423.27,673.52,423.19,674.83,423.32C675.49,423.39,676.15,424.31,676.80,424.31C678.11,424.31,679.43,423.32,680.74,423.32C681.73,423.32,682.71,424.31,683.69,424.31C686.65,424.31,689.60,424.31,692.56,424.31C693.54,424.31,694.53,423.32,695.51,423.32C696.82,423.32,698.14,423.32,699.45,423.32C700.43,423.32,701.42,424.15,702.40,424.51C703.39,424.86,704.37,425.49,705.36,425.49C706.34,425.49,707.33,425.49,708.31,425.49C708.97,425.49,709.62,424.31,710.28,424.31C711.26,424.31,712.25,425.49,713.23,425.49C714.55,425.49,715.86,424.31,717.17,424.31C717.99,424.31,718.81,425.49,719.63,425.49C721.44,425.49,723.24,425.42,725.05,425.29C726.03,425.22,727.02,424.31,728.00,424.31C728.99,424.31,729.97,428.25,730.96,428.25C732.27,428.25,733.58,426.60,734.90,426.28C735.88,426.04,736.86,426.05,737.85,425.79C739.00,425.48,740.15,423.32,741.30,423.32C742.12,423.32,742.94,424.31,743.76,424.31C746.05,424.31,748.35,424.31,750.65,424.31C751.31,424.31,751.96,423.52,752.62,423.52C753.28,423.52,753.93,424.51,754.59,424.51C756.23,424.51,757.87,424.31,759.51,424.31C760.17,424.31,760.82,425.29,761.48,425.29C762.79,425.29,764.11,425.10,765.42,425.10C766.73,425.10,768.05,428.19,769.36,428.25C772.90,428.40,776.45,428.44,779.99,428.44C780.33,428.44,780.66,428.40,781.00,428.40C819.60,428.40,858.20,428.40,896.80,428.40"/><path stroke="#0A437C" d="M301.20,428.35C306.80,428.35,312.40,428.35,318.00,428.35C318.58,428.35,319.16,428.67,319.74,428.67C320.55,428.67,321.36,421.25,322.16,420.14C323.13,418.81,324.10,419.00,325.07,417.72C325.72,416.86,326.36,414.79,327.01,412.39C327.82,409.38,328.62,397.85,329.43,397.85C330.08,397.85,330.72,407.16,331.37,407.54C332.50,408.21,333.63,408.21,334.76,408.51C336.05,408.86,337.34,409.48,338.64,409.48C339.44,409.48,340.25,406.97,341.06,405.60C341.87,404.24,342.67,401.24,343.48,401.24C344.29,401.24,345.10,408.43,345.90,409.48C346.71,410.53,347.52,411.42,348.33,411.42C349.29,411.42,350.26,410.40,351.23,409.48C352.20,408.56,353.17,404.64,354.14,404.64C354.95,404.64,355.75,418.20,356.56,418.20C357.37,418.20,358.18,414.60,358.98,412.39C359.79,410.17,360.60,404.64,361.41,404.64C362.21,404.64,363.02,412.39,363.83,412.39C364.80,412.39,365.77,409.97,366.74,409.48C367.71,409.00,368.67,408.51,369.64,408.51C370.94,408.51,372.23,412.34,373.52,413.36C374.33,413.99,375.13,414.81,375.94,414.81C376.75,414.81,377.56,403.18,378.36,403.18C379.01,403.18,379.66,408.64,380.30,410.45C381.11,412.71,381.92,415.78,382.72,415.78C383.55,415.78,384.38,401.24,385.21,401.24C386.50,401.24,387.79,411.42,389.08,411.42C390.21,411.42,391.34,403.18,392.47,403.18C393.76,403.18,395.06,409.74,396.35,410.45C397.32,410.98,398.29,411.42,399.26,411.42C400.71,411.42,402.16,403.18,403.62,403.18C404.59,403.18,405.55,413.36,406.52,413.36C407.98,413.36,409.43,409.05,410.88,408.03C412.18,407.12,413.47,406.09,414.76,406.09C415.73,406.09,416.70,418.20,417.67,418.20C418.96,418.20,420.25,402.21,421.54,402.21C422.51,402.21,423.48,415.78,424.45,415.78C425.74,415.78,427.03,405.60,428.33,405.60C429.46,405.60,430.59,406.50,431.72,407.54C433.01,408.74,434.30,417.72,435.59,417.72C436.56,417.72,437.53,402.21,438.50,402.21C439.79,402.21,441.08,415.78,442.38,415.78C443.51,415.78,444.64,407.06,445.77,407.06C446.57,407.06,447.38,408.85,448.19,410.45C449.32,412.69,450.45,420.13,451.58,423.05C452.55,425.55,453.52,428.86,454.49,428.86C455.66,428.86,456.83,428.30,458.00,428.30C499.50,428.30,541.00,428.30,582.50,428.30C583.17,428.30,583.83,426.42,584.50,426.40C585.50,426.36,586.50,426.36,587.50,426.35C591.50,426.30,595.50,426.25,599.50,426.25C599.67,426.25,599.83,426.43,600.00,426.43C614.44,426.43,628.88,426.43,643.32,426.43C644.31,426.43,645.29,426.29,646.28,426.29C647.26,426.29,648.25,426.62,649.23,426.62C649.89,426.62,650.54,426.55,651.20,426.43C652.02,426.28,652.84,423.91,653.66,423.14C654.48,422.37,655.30,421.56,656.12,421.37C657.11,421.14,658.09,420.97,659.08,420.97C661.05,420.97,663.02,421.66,664.99,421.66C665.38,421.66,665.77,410.91,666.17,410.34C666.59,409.72,667.02,409.35,667.45,409.35C667.87,409.35,668.30,409.77,668.73,410.34C669.29,411.08,669.84,420.76,670.40,421.17C671.88,422.25,673.36,422.65,674.83,422.65C676.80,422.65,678.77,422.35,680.74,422.35C682.05,422.35,683.37,423.34,684.68,423.34C687.30,423.34,689.93,423.34,692.56,423.34C693.70,423.34,694.85,421.17,696.00,421.17C696.82,421.17,697.64,421.25,698.46,421.37C699.45,421.50,700.43,422.96,701.42,423.34C702.40,423.71,703.39,424.12,704.37,424.12C706.01,424.12,707.65,423.14,709.29,423.14C710.28,423.14,711.26,424.12,712.25,424.12C713.89,424.12,715.53,423.34,717.17,423.34C718.48,423.34,719.80,424.32,721.11,424.32C723.41,424.32,725.71,423.47,728.00,423.47C729.15,423.47,730.30,427.61,731.45,427.61C732.93,427.61,734.40,426.06,735.88,425.11C737.69,423.94,739.49,420.97,741.30,420.97C742.44,420.97,743.59,423.14,744.74,423.34C745.73,423.51,746.71,423.63,747.70,423.63C749.17,423.63,750.65,422.65,752.13,422.65C753.28,422.65,754.42,423.63,755.57,423.63C756.89,423.63,758.20,422.15,759.51,422.15C760.50,422.15,761.48,423.91,762.47,424.12C763.78,424.41,765.09,424.32,766.40,424.62C767.55,424.87,768.70,427.61,769.85,427.61C773.23,427.61,776.61,427.61,779.99,427.61C780.33,427.61,780.66,427.65,781.00,427.65C795.17,427.65,809.33,427.65,823.50,427.65C824.23,427.65,824.97,427.50,825.70,427.50C826.47,427.50,827.23,427.65,828.00,427.65C833.83,427.65,839.67,427.65,845.50,427.65C846.27,427.65,847.03,427.50,847.80,427.50C848.53,427.50,849.27,427.65,850.00,427.65C853.17,427.65,856.33,427.65,859.50,427.65C860.20,427.65,860.90,427.50,861.60,427.50C862.40,427.50,863.20,427.65,864.00,427.65C865.93,427.65,867.87,427.65,869.80,427.65C870.50,427.65,871.20,427.50,871.90,427.50C872.60,427.50,873.30,427.65,874.00,427.65C881.60,427.65,889.20,427.65,896.80,427.65"/><path stroke="#890F02" d="M301.20,428.33C306.80,428.33,312.40,428.33,318.00,428.33C318.58,428.33,319.16,428.67,319.74,428.67C320.39,428.67,321.03,418.30,321.68,418.13C322.81,417.84,323.94,418.01,325.07,417.72C325.72,417.55,326.36,413.34,327.01,409.41C327.65,405.48,328.30,389.06,328.95,389.06C329.27,389.06,329.59,389.06,329.91,389.06C330.56,389.06,331.21,405.14,331.85,405.54C332.34,405.83,332.82,406.02,333.31,406.02C334.28,406.02,335.24,403.11,336.21,403.11C337.02,403.11,337.83,405.54,338.64,405.54C339.28,405.54,339.93,405.15,340.57,404.57C341.38,403.83,342.19,386.16,343.00,386.16C343.48,386.16,343.97,386.36,344.45,386.64C345.42,387.20,346.39,403.11,347.36,403.11C348.33,403.11,349.29,382.28,350.26,382.28C350.75,382.28,351.23,383.76,351.72,385.19C352.52,387.56,353.33,401.18,354.14,401.18C354.62,401.18,355.11,399.82,355.59,398.75C356.40,396.97,357.21,391.13,358.02,390.03C359.47,388.05,360.92,386.64,362.38,386.64C363.02,386.64,363.67,406.02,364.31,406.02C365.61,406.02,366.90,375.50,368.19,375.50C368.51,375.50,368.84,375.70,369.16,375.98C369.80,376.55,370.45,406.99,371.10,406.99C371.58,406.99,372.07,406.33,372.55,405.54C373.52,403.96,374.49,383.25,375.46,383.25C376.26,383.25,377.07,393.25,377.88,393.91C379.01,394.83,380.14,395.36,381.27,395.36C382.08,395.36,382.89,394.80,383.69,393.91C384.36,393.17,385.02,383.73,385.69,383.73C386.82,383.73,387.95,402.14,389.08,402.14C389.57,402.14,390.05,401.96,390.53,401.66C391.18,401.26,391.83,372.59,392.47,372.59C392.80,372.59,393.12,372.80,393.44,373.07C394.25,373.76,395.06,406.02,395.86,406.02C396.19,406.02,396.51,406.02,396.83,406.02C397.48,406.02,398.13,391.00,398.77,391.00C399.90,391.00,401.03,392.98,402.16,393.91C403.62,395.10,405.07,397.30,406.52,397.30C407.82,397.30,409.11,379.37,410.40,379.37C410.72,379.37,411.05,379.59,411.37,379.86C412.34,380.66,413.31,405.05,414.28,405.05C414.60,405.05,414.92,405.05,415.24,405.05C415.73,405.05,416.21,391.49,416.70,391.49C417.83,391.49,418.96,391.69,420.09,391.97C421.38,392.29,422.67,396.33,423.97,396.33C425.42,396.33,426.87,380.34,428.33,380.34C428.65,380.34,428.97,380.74,429.29,381.31C429.78,382.17,430.26,405.05,430.75,405.05C431.23,405.05,431.72,405.05,432.20,405.05C433.01,405.05,433.82,385.67,434.62,385.67C435.43,385.67,436.24,386.39,437.05,387.12C438.82,388.74,440.60,401.66,442.38,401.66C442.86,401.66,443.34,393.79,443.83,390.03C444.48,385.02,445.12,375.50,445.77,375.50C446.09,375.50,446.41,375.70,446.74,375.98C447.38,376.55,448.03,397.57,448.67,403.60C449.48,411.13,450.29,416.84,451.10,420.07C451.90,423.30,452.71,426.01,453.52,426.92C454.33,427.83,455.13,428.63,455.94,428.63C456.63,428.63,457.31,428.28,458.00,428.28C499.50,428.28,541.00,428.28,582.50,428.28C583.17,428.28,583.83,426.00,584.50,426.00C585.50,426.00,586.50,426.33,587.50,426.33C591.50,426.33,595.50,426.23,599.50,426.23C599.67,426.23,599.83,426.41,600.00,426.41C614.44,426.41,628.88,426.41,643.32,426.41C644.31,426.41,645.29,425.89,646.28,425.89C647.26,425.89,648.25,426.60,649.23,426.60C649.89,426.60,650.54,426.53,651.20,426.41C652.02,426.26,652.84,423.54,653.66,422.74C654.48,421.94,655.30,421.16,656.12,420.97C657.11,420.74,658.09,420.57,659.08,420.57C661.05,420.57,663.02,421.26,664.99,421.26C665.38,421.26,665.77,410.90,666.17,410.34C666.59,409.73,667.02,409.35,667.45,409.35C667.87,409.35,668.30,409.77,668.73,410.34C669.29,411.08,669.84,420.36,670.40,420.77C671.88,421.85,673.36,422.25,674.83,422.25C676.80,422.25,678.77,421.95,680.74,421.95C682.05,421.95,683.37,422.94,684.68,422.94C687.30,422.94,689.93,422.94,692.56,422.94C693.70,422.94,694.85,420.77,696.00,420.77C696.82,420.77,697.64,420.85,698.46,420.97C699.45,421.10,700.43,422.56,701.42,422.94C702.40,423.31,703.39,423.72,704.37,423.72C706.01,423.72,707.65,422.74,709.29,422.74C710.28,422.74,711.26,423.72,712.25,423.72C713.89,423.72,715.53,422.94,717.17,422.94C718.48,422.94,719.80,423.92,721.11,423.92C723.41,423.92,725.71,423.45,728.00,423.45C729.15,423.45,730.30,427.59,731.45,427.59C732.93,427.59,734.40,425.74,735.88,424.71C737.69,423.44,739.49,420.57,741.30,420.57C742.44,420.57,743.59,422.74,744.74,422.94C745.73,423.11,746.71,423.23,747.70,423.23C749.17,423.23,750.65,422.25,752.13,422.25C753.28,422.25,754.42,423.23,755.57,423.23C756.89,423.23,758.20,421.75,759.51,421.75C760.50,421.75,761.48,423.51,762.47,423.72C763.78,424.01,765.09,423.92,766.40,424.22C767.55,424.48,768.70,427.59,769.85,427.59C773.23,427.59,776.61,427.59,779.99,427.59C780.33,427.59,780.66,427.63,781.00,427.63C795.17,427.63,809.33,427.63,823.50,427.63C824.23,427.63,824.97,427.10,825.70,427.10C826.47,427.10,827.23,427.63,828.00,427.63C833.83,427.63,839.67,427.63,845.50,427.63C846.27,427.63,847.03,427.10,847.80,427.10C848.53,427.10,849.27,427.63,850.00,427.63C853.17,427.63,856.33,427.63,859.50,427.63C860.20,427.63,860.90,427.10,861.60,427.10C862.40,427.10,863.20,427.63,864.00,427.63C865.93,427.63,867.87,427.63,869.80,427.63C870.50,427.63,871.20,427.10,871.90,427.10C872.60,427.10,873.30,427.63,874.00,427.63C881.60,427.63,889.20,427.63,896.80,427.63"/><path stroke="#FF780A" d="M301.20,428.28C306.80,428.28,312.40,428.28,318.00,428.28C318.58,428.28,319.16,428.67,319.74,428.67C320.39,428.67,321.03,417.23,321.68,417.23C322.81,417.23,323.94,417.43,325.07,417.43C325.72,417.43,326.36,412.64,327.01,408.51C327.65,404.38,328.30,388.16,328.95,388.16C329.27,388.16,329.59,388.16,329.91,388.16C330.56,388.16,331.21,404.24,331.85,404.64C332.34,404.93,332.82,405.12,333.31,405.12C334.28,405.12,335.24,402.21,336.21,402.21C337.02,402.21,337.83,404.64,338.64,404.64C339.28,404.64,339.93,404.25,340.57,403.67C341.38,402.93,342.19,385.26,343.00,385.26C343.48,385.26,343.97,385.46,344.45,385.74C345.42,386.30,346.39,402.21,347.36,402.21C348.33,402.21,349.29,381.38,350.26,381.38C350.75,381.38,351.23,382.86,351.72,384.29C352.52,386.66,353.33,400.28,354.14,400.28C354.62,400.28,355.11,398.92,355.59,397.85C356.40,396.07,357.21,390.23,358.02,389.13C359.47,387.15,360.92,385.74,362.38,385.74C363.02,385.74,363.67,405.12,364.31,405.12C365.61,405.12,366.90,374.60,368.19,374.60C368.51,374.60,368.84,374.80,369.16,375.08C369.80,375.65,370.45,406.09,371.10,406.09C371.58,406.09,372.07,405.43,372.55,404.64C373.52,403.06,374.49,382.35,375.46,382.35C376.26,382.35,377.07,392.35,377.88,393.01C379.01,393.93,380.14,394.46,381.27,394.46C382.08,394.46,382.89,393.90,383.69,393.01C384.36,392.27,385.02,382.83,385.69,382.83C386.82,382.83,387.95,401.24,389.08,401.24C389.57,401.24,390.05,401.06,390.53,400.76C391.18,400.36,391.83,371.69,392.47,371.69C392.80,371.69,393.12,371.90,393.44,372.17C394.25,372.86,395.06,405.12,395.86,405.12C396.19,405.12,396.51,405.12,396.83,405.12C397.48,405.12,398.13,390.10,398.77,390.10C399.90,390.10,401.03,392.08,402.16,393.01C403.62,394.20,405.07,396.40,406.52,396.40C407.82,396.40,409.11,378.47,410.40,378.47C410.72,378.47,411.05,378.69,411.37,378.96C412.34,379.76,413.31,404.15,414.28,404.15C414.60,404.15,414.92,404.15,415.24,404.15C415.73,404.15,416.21,390.59,416.70,390.59C417.83,390.59,418.96,390.79,420.09,391.07C421.38,391.39,422.67,395.43,423.97,395.43C425.42,395.43,426.87,379.44,428.33,379.44C428.65,379.44,428.97,379.84,429.29,380.41C429.78,381.27,430.26,404.15,430.75,404.15C431.23,404.15,431.72,404.15,432.20,404.15C433.01,404.15,433.82,384.77,434.62,384.77C435.43,384.77,436.24,385.49,437.05,386.22C438.82,387.84,440.60,400.76,442.38,400.76C442.86,400.76,443.34,392.89,443.83,389.13C444.48,384.12,445.12,374.60,445.77,374.60C446.09,374.60,446.41,374.80,446.74,375.08C447.38,375.65,448.03,396.67,448.67,402.70C449.48,410.23,450.29,415.66,451.10,419.17C451.90,422.68,452.71,425.99,453.52,426.92C454.33,427.85,455.13,428.63,455.94,428.63C456.63,428.63,457.31,428.23,458.00,428.23C499.50,428.23,541.00,428.23,582.50,428.23C583.17,428.23,583.83,425.95,584.50,425.95C585.50,425.95,586.50,426.28,587.50,426.28C591.50,426.28,595.50,426.18,599.50,426.18C599.67,426.18,599.83,426.36,600.00,426.36C614.44,426.36,628.88,426.36,643.32,426.36C644.31,426.36,645.29,425.84,646.28,425.84C647.26,425.84,648.25,426.55,649.23,426.55C649.89,426.55,650.54,426.48,651.20,426.36C652.02,426.21,652.84,423.49,653.66,422.69C654.48,421.89,655.30,421.11,656.12,420.92C657.11,420.69,658.09,420.52,659.08,420.52C661.05,420.52,663.02,421.21,664.99,421.21C665.38,421.21,665.77,410.46,666.17,409.89C666.59,409.27,667.02,408.90,667.45,408.90C667.87,408.90,668.30,409.32,668.73,409.89C669.29,410.63,669.84,420.31,670.40,420.72C671.88,421.80,673.36,422.20,674.83,422.20C676.80,422.20,678.77,421.90,680.74,421.90C682.05,421.90,683.37,422.89,684.68,422.89C687.30,422.89,689.93,422.89,692.56,422.89C693.70,422.89,694.85,420.72,696.00,420.72C696.82,420.72,697.64,420.80,698.46,420.92C699.45,421.05,700.43,422.51,701.42,422.89C702.40,423.26,703.39,423.67,704.37,423.67C706.01,423.67,707.65,422.69,709.29,422.69C710.28,422.69,711.26,423.67,712.25,423.67C713.89,423.67,715.53,422.89,717.17,422.89C718.48,422.89,719.80,423.87,721.11,423.87C723.41,423.87,725.71,423.40,728.00,423.40C729.15,423.40,730.30,427.54,731.45,427.54C732.93,427.54,734.40,425.69,735.88,424.66C737.69,423.39,739.49,420.52,741.30,420.52C742.44,420.52,743.59,422.69,744.74,422.89C745.73,423.06,746.71,423.18,747.70,423.18C749.17,423.18,750.65,422.20,752.13,422.20C753.28,422.20,754.42,423.18,755.57,423.18C756.89,423.18,758.20,421.70,759.51,421.70C760.50,421.70,761.48,423.46,762.47,423.67C763.78,423.96,765.09,423.87,766.40,424.17C767.55,424.43,768.70,427.54,769.85,427.54C773.23,427.54,776.61,427.54,779.99,427.54C780.33,427.54,780.66,427.58,781.00,427.58C795.17,427.58,809.33,427.58,823.50,427.58C824.23,427.58,824.97,427.05,825.70,427.05C826.47,427.05,827.23,427.58,828.00,427.58C833.83,427.58,839.67,427.58,845.50,427.58C846.27,427.58,847.03,427.05,847.80,427.05C848.53,427.05,849.27,427.58,850.00,427.58C853.17,427.58,856.33,427.58,859.50,427.58C860.20,427.58,860.90,427.05,861.60,427.05C862.40,427.05,863.20,427.58,864.00,427.58C865.93,427.58,867.87,427.58,869.80,427.58C870.50,427.58,871.20,427.05,871.90,427.05C872.60,427.05,873.30,427.58,874.00,427.58C881.60,427.58,889.20,427.58,896.80,427.58"/><path stroke="#6D1F62" d="M301.20,428.20C306.80,428.20,312.40,428.20,318.00,428.20C318.58,428.20,319.16,428.38,319.74,428.38C320.55,428.38,321.36,416.66,322.16,410.45C322.97,404.24,323.78,392.51,324.59,391.07C325.39,389.63,326.20,389.11,327.01,388.65C327.82,388.19,328.62,387.68,329.43,387.68C330.40,387.68,331.37,389.62,332.34,389.62C333.47,389.62,334.60,386.71,335.73,386.71C337.02,386.71,338.31,387.68,339.60,387.68C340.90,387.68,342.19,384.77,343.48,384.77C344.77,384.77,346.06,386.71,347.36,386.71C348.33,386.71,349.29,376.53,350.26,376.53C351.39,376.53,352.52,389.62,353.66,389.62C354.79,389.62,355.92,375.57,357.05,375.57C357.85,375.57,358.66,377.21,359.47,378.47C360.92,380.74,362.38,389.13,363.83,389.13C365.28,389.13,366.74,374.40,368.19,374.40C369.16,374.40,370.13,390.10,371.10,390.10C372.55,390.10,374.00,373.63,375.46,373.63C376.43,373.63,377.40,385.26,378.36,385.26C379.66,385.26,380.95,378.47,382.24,378.47C383.39,378.47,384.54,381.84,385.69,382.83C386.66,383.67,387.63,384.77,388.60,384.77C389.89,384.77,391.18,371.01,392.47,371.01C393.60,371.01,394.73,389.62,395.86,389.62C396.99,389.62,398.13,379.44,399.26,379.44C400.71,379.44,402.16,389.62,403.62,389.62C404.75,389.62,405.88,381.22,407.01,379.93C408.14,378.63,409.27,377.50,410.40,377.50C411.69,377.50,412.98,389.62,414.28,389.62C415.41,389.62,416.54,378.47,417.67,378.47C418.80,378.47,419.93,386.71,421.06,386.71C422.19,386.71,423.32,380.59,424.45,379.93C425.90,379.07,427.36,378.47,428.81,378.47C429.78,378.47,430.75,388.16,431.72,388.16C432.91,388.16,434.11,374.11,435.30,374.11C436.21,374.11,437.11,382.14,438.02,382.83C439.63,384.07,441.25,384.77,442.86,384.77C443.83,384.77,444.80,373.43,445.77,373.43C446.57,373.43,447.38,380.78,448.19,385.26C449.00,389.73,449.80,394.41,450.61,400.76C451.26,405.84,451.90,417.20,452.55,420.14C453.52,424.55,454.49,428.29,455.46,428.29C456.30,428.29,457.15,428.15,458.00,428.15C499.50,428.15,541.00,428.15,582.50,428.15C583.17,428.15,583.83,425.60,584.50,425.60C585.50,425.60,586.50,426.20,587.50,426.20C591.50,426.20,595.50,426.10,599.50,426.10C599.67,426.10,599.83,426.28,600.00,426.28C614.44,426.28,628.88,426.28,643.32,426.28C644.31,426.28,645.29,425.49,646.28,425.49C647.26,425.49,648.25,426.47,649.23,426.47C649.89,426.47,650.54,426.40,651.20,426.28C652.02,426.13,652.84,423.15,653.66,422.34C654.48,421.52,655.30,420.76,656.12,420.57C657.11,420.34,658.09,420.17,659.08,420.17C661.05,420.17,663.02,420.86,664.99,420.86C665.38,420.86,665.77,410.11,666.17,409.54C666.59,408.92,667.02,408.55,667.45,408.55C667.87,408.55,668.30,408.97,668.73,409.54C669.29,410.28,669.84,419.96,670.40,420.37C671.88,421.45,673.36,421.85,674.83,421.85C676.80,421.85,678.77,421.55,680.74,421.55C682.05,421.55,683.37,422.54,684.68,422.54C687.30,422.54,689.93,422.54,692.56,422.54C693.70,422.54,694.85,420.37,696.00,420.37C696.82,420.37,697.64,420.45,698.46,420.57C699.45,420.70,700.43,422.16,701.42,422.54C702.40,422.91,703.39,423.32,704.37,423.32C706.01,423.32,707.65,422.34,709.29,422.34C710.28,422.34,711.26,423.32,712.25,423.32C713.89,423.32,715.53,422.54,717.17,422.54C718.48,422.54,719.80,423.52,721.11,423.52C723.41,423.52,725.71,423.32,728.00,423.32C729.15,423.32,730.30,427.46,731.45,427.46C732.93,427.46,734.40,425.40,735.88,424.31C737.69,422.98,739.49,420.17,741.30,420.17C742.44,420.17,743.59,422.34,744.74,422.54C745.73,422.71,746.71,422.83,747.70,422.83C749.17,422.83,750.65,421.85,752.13,421.85C753.28,421.85,754.42,422.83,755.57,422.83C756.89,422.83,758.20,421.35,759.51,421.35C760.50,421.35,761.48,423.11,762.47,423.32C763.78,423.61,765.09,423.52,766.40,423.82C767.55,424.08,768.70,427.46,769.85,427.46C773.23,427.46,776.61,427.46,779.99,427.46C780.33,427.46,780.66,427.50,781.00,427.50C795.17,427.50,809.33,427.50,823.50,427.50C824.23,427.50,824.97,426.70,825.70,426.70C826.47,426.70,827.23,427.50,828.00,427.50C833.83,427.50,839.67,427.50,845.50,427.50C846.27,427.50,847.03,426.70,847.80,426.70C848.53,426.70,849.27,427.50,850.00,427.50C853.17,427.50,856.33,427.50,859.50,427.50C860.20,427.50,860.90,426.70,861.60,426.70C862.40,426.70,863.20,427.50,864.00,427.50C865.93,427.50,867.87,427.50,869.80,427.50C870.50,427.50,871.20,426.70,871.90,426.70C872.60,426.70,873.30,427.50,874.00,427.50C881.60,427.50,889.20,427.50,896.80,427.50"/><path stroke="#7EB26D" d="M301.2,275.5H896.8"/></g></svg>
<div class="lm" style="left:15.0px;top:464.0px;background:#EAB839"></div>
<div class="lm" style="left:122.1px;top:464.0px;background:#0A437C"></div>
<div class="lm" style="left:213.2px;top:464.0px;background:#890F02"></div>
<div class="lm" style="left:312.0px;top:464.0px;background:#FF780A"></div>
<div class="lm" style="left:403.0px;top:464.0px;background:#6D1F62"></div>
<div class="lm" style="left:499.0px;top:464.0px;background:#7EB26D"></div>
<svg class="ov" width="1828" height="743" viewBox="0 0 1828 743"><g stroke="rgba(240,250,255,0.09)" stroke-width="1" shape-rendering="crispEdges"><path d="M1037.5,275.0V435.0"/><path d="M1108.5,275.0V435.0"/><path d="M1178.5,275.0V435.0"/><path d="M1249.5,275.0V435.0"/><path d="M1319.5,275.0V435.0"/><path d="M1390.5,275.0V435.0"/><path d="M1461.5,275.0V435.0"/><path d="M1531.5,275.0V435.0"/><path d="M1602.5,275.0V435.0"/><path d="M1673.5,275.0V435.0"/><path d="M1743.5,275.0V435.0"/><path d="M1814.5,275.0V435.0"/><path d="M972.7,279.5H1819.3"/><path d="M972.7,317.5H1819.3"/><path d="M972.7,354.5H1819.3"/><path d="M972.7,392.5H1819.3"/><path d="M972.7,430.5H1819.3"/></g><g fill-opacity="0.4" stroke="none"><path fill="#F2CC0C" d="M1217.40,423.32L1239.54,423.32L1242.49,422.34L1246.43,422.34L1249.39,421.35L1253.32,419.39L1256.28,419.39L1260.71,420.37L1263.66,419.39L1267.11,419.39L1270.56,418.20L1274.49,419.39L1277.94,418.40L1281.39,418.40L1285.32,420.57L1288.57,419.39L1292.22,419.39L1295.66,418.20L1299.11,419.19L1302.56,420.37L1306.49,419.19L1309.45,420.37L1313.19,418.20L1316.34,420.37L1320.28,418.20L1323.73,419.39L1327.17,420.37L1330.62,418.20L1334.26,419.39L1337.51,418.20L1341.45,419.39L1345.39,420.57L1348.34,419.39L1352.28,418.40L1355.73,417.12L1359.17,418.20L1362.42,420.37L1366.36,419.39L1369.31,422.54L1389.99,422.54L1395.00,422.50L1398.00,423.00L1402.00,422.50L1444.00,422.50L1447.00,423.10L1451.00,422.50L1478.00,422.50L1482.00,423.20L1488.00,422.50L1592.00,422.50L1596.00,421.40L1636.00,421.40L1640.00,422.30L1644.00,421.60L1648.00,422.30L1660.00,422.30L1664.00,421.40L1683.00,421.40L1687.00,422.50L1817.80,422.50L1817.80,430.40L1217.40,430.40Z"/><path fill="#052B51" d="M1217.40,409.34L1239.54,409.34L1242.49,406.39L1246.43,406.39L1249.39,403.63L1253.32,397.53L1260.71,396.54L1263.66,393.59L1267.11,396.25L1270.56,393.29L1277.94,393.29L1281.39,392.31L1285.32,396.25L1288.57,391.62L1292.22,393.29L1295.66,391.62L1299.11,392.31L1302.56,394.57L1306.49,391.62L1309.45,395.26L1313.19,391.82L1316.34,395.56L1320.77,391.32L1323.73,391.32L1327.17,395.56L1330.62,391.32L1341.45,391.32L1345.39,394.57L1348.34,391.62L1352.28,391.62L1355.73,390.14L1359.17,390.14L1362.42,395.56L1366.36,391.82L1369.31,399.69L1389.99,399.69L1506.00,399.70L1509.00,398.60L1817.80,398.60L1817.80,422.50L1687.00,422.50L1683.00,421.40L1664.00,421.40L1660.00,422.30L1648.00,422.30L1644.00,421.60L1640.00,422.30L1636.00,421.40L1596.00,421.40L1592.00,422.50L1488.00,422.50L1482.00,423.20L1478.00,422.50L1451.00,422.50L1447.00,423.10L1444.00,422.50L1402.00,422.50L1398.00,423.00L1395.00,422.50L1389.99,422.54L1369.31,422.54L1366.36,419.39L1362.42,420.37L1359.17,418.20L1355.73,417.12L1352.28,418.40L1348.34,419.39L1345.39,420.57L1341.45,419.39L1337.51,418.20L1334.26,419.39L1330.62,418.20L1327.17,420.37L1323.73,419.39L1320.28,418.20L1316.34,420.37L1313.19,418.20L1309.45,420.37L1306.49,419.19L1302.56,420.37L1299.11,419.19L1295.66,418.20L1292.22,419.39L1288.57,419.39L1285.32,420.57L1281.39,418.40L1277.94,418.40L1274.49,419.39L1270.56,418.20L1267.11,419.39L1263.66,419.39L1260.71,420.37L1256.28,419.39L1253.32,419.39L1249.39,421.35L1246.43,422.34L1242.49,422.34L1239.54,423.32L1217.40,423.32Z"/><path fill="#7EB26D" d="M1217.40,292.30L1817.80,292.30L1817.80,398.60L1509.00,398.60L1506.00,399.70L1389.99,399.69L1369.31,399.69L1366.36,391.82L1362.42,395.56L1359.17,390.14L1355.73,390.14L1352.28,391.62L1348.34,391.62L1345.39,394.57L1341.45,391.32L1330.62,391.32L1327.17,395.56L1323.73,391.32L1320.77,391.32L1316.34,395.56L1313.19,391.82L1309.45,395.26L1306.49,391.62L1302.56,394.57L1299.11,392.31L1295.66,391.62L1292.22,393.29L1288.57,391.62L1285.32,396.25L1281.39,392.31L1277.94,393.29L1270.56,393.29L1267.11,396.25L1263.66,393.59L1260.71,396.54L1253.32,397.53L1249.39,403.63L1246.43,406.39L1242.49,406.39L1239.54,409.34L1217.40,409.34Z"/></g><g fill="none" stroke-width="1" stroke-linejoin="round"><path stroke="#F2CC0C" d="M1217.40,423.32L1239.54,423.32L1242.49,422.34L1246.43,422.34L1249.39,421.35L1253.32,419.39L1256.28,419.39L1260.71,420.37L1263.66,419.39L1267.11,419.39L1270.56,418.20L1274.49,419.39L1277.94,418.40L1281.39,418.40L1285.32,420.57L1288.57,419.39L1292.22,419.39L1295.66,418.20L1299.11,419.19L1302.56,420.37L1306.49,419.19L1309.45,420.37L1313.19,418.20L1316.34,420.37L1320.28,418.20L1323.73,419.39L1327.17,420.37L1330.62,418.20L1334.26,419.39L1337.51,418.20L1341.45,419.39L1345.39,420.57L1348.34,419.39L1352.28,418.40L1355.73,417.12L1359.17,418.20L1362.42,420.37L1366.36,419.39L1369.31,422.54L1389.99,422.54L1395.00,422.50L1398.00,423.00L1402.00,422.50L1444.00,422.50L1447.00,423.10L1451.00,422.50L1478.00,422.50L1482.00,423.20L1488.00,422.50L1592.00,422.50L1596.00,421.40L1636.00,421.40L1640.00,422.30L1644.00,421.60L1648.00,422.30L1660.00,422.30L1664.00,421.40L1683.00,421.40L1687.00,422.50L1817.80,422.50"/><path stroke="#052B51" d="M1217.40,409.34L1239.54,409.34L1242.49,406.39L1246.43,406.39L1249.39,403.63L1253.32,397.53L1260.71,396.54L1263.66,393.59L1267.11,396.25L1270.56,393.29L1277.94,393.29L1281.39,392.31L1285.32,396.25L1288.57,391.62L1292.22,393.29L1295.66,391.62L1299.11,392.31L1302.56,394.57L1306.49,391.62L1309.45,395.26L1313.19,391.82L1316.34,395.56L1320.77,391.32L1323.73,391.32L1327.17,395.56L1330.62,391.32L1341.45,391.32L1345.39,394.57L1348.34,391.62L1352.28,391.62L1355.73,390.14L1359.17,390.14L1362.42,395.56L1366.36,391.82L1369.31,399.69L1389.99,399.69L1506.00,399.70L1509.00,398.60L1817.80,398.60"/><path stroke="#7EB26D" d="M1217.4,292.6H1817.8"/><path stroke="#BF1B00" stroke-width="1.3" d="M1217.4,292.3H1818.6"/><path stroke="#E0F9D7" stroke-opacity="0.55" stroke-dasharray="0.8 2.7" d="M1217.4,292.3H1818.6"/></g></svg>
<div class="lm" style="left:935.9px;top:464.0px;background:#E0F9D7"></div>
<div class="lm" style="left:1026.8px;top:464.0px;background:#F2CC0C"></div>
<div class="lm" style="left:1120.2px;top:464.0px;background:#052B51"></div>
<div class="lm" style="left:1270.1px;top:464.0px;background:#7EB26D"></div>
<div class="lm" style="left:1358.2px;top:464.0px;background:#BF1B00"></div>
<svg class="ov" width="1828" height="743" viewBox="0 0 1828 743"><g stroke="rgba(240,250,255,0.09)" stroke-width="1" shape-rendering="crispEdges"><path d="M130.5,541.0V700.7"/><path d="M199.5,541.0V700.7"/><path d="M269.5,541.0V700.7"/><path d="M338.5,541.0V700.7"/><path d="M408.5,541.0V700.7"/><path d="M477.5,541.0V700.7"/><path d="M546.5,541.0V700.7"/><path d="M616.5,541.0V700.7"/><path d="M685.5,541.0V700.7"/><path d="M755.5,541.0V700.7"/><path d="M824.5,541.0V700.7"/><path d="M893.5,541.0V700.7"/><path d="M66.7,568.5H898.2"/><path d="M66.7,604.5H898.2"/><path d="M66.7,640.5H898.2"/><path d="M66.7,676.5H898.2"/></g><g fill-opacity="0.4" stroke="none"><path fill="#73BF69" d="M311.00,568.50L588.16,568.50L588.66,567.83L602.99,567.26L608.72,566.40L613.02,566.69L654.01,566.40L657.45,558.66L661.75,555.80L674.65,555.80L678.95,557.52L686.11,557.52L690.41,558.37L694.71,558.09L699.87,556.37L703.31,557.23L709.04,559.81L716.21,558.95L723.37,559.81L730.54,560.38L734.26,566.11L739.13,560.95L744.29,555.80L747.73,560.09L754.90,557.52L759.20,558.37L761.49,557.52L766.36,559.81L770.66,564.39L772.67,568.12L773.67,568.50L896.80,568.50L896.80,568.30L311.00,568.30Z"/><path fill="#FF780A" d="M311.00,568.30L896.80,568.30L896.80,569.40L773.67,569.40L772.67,568.69L770.66,595.92L768.37,621.72L764.93,643.21L761.49,656.11L759.20,656.68L754.33,670.44L747.45,634.61L744.29,682.48L739.13,627.45L734.26,581.59L730.54,636.05L727.67,630.32L723.37,628.88L719.93,644.65L716.49,630.32L713.34,638.05L709.61,635.19L706.75,636.91L702.16,676.17L699.29,681.33L694.71,659.84L691.84,658.98L688.40,660.41L684.96,668.44L682.67,665.57L676.08,681.33L674.65,681.91L668.91,679.90L663.75,676.17L660.89,678.18L657.45,660.41L655.44,615.98L654.01,581.59L641.69,581.59L634.52,581.02L630.22,579.58L617.32,578.72L608.72,578.15L602.99,576.43L597.26,575.86L592.96,573.57L590.95,571.56L588.66,568.69L588.16,568.50L311.00,568.50Z"/></g><g fill="none" stroke-width="1" stroke-linejoin="round"><path stroke="#73BF69" d="M311.00,568.50L588.16,568.50L588.66,567.83L602.99,567.26L608.72,566.40L613.02,566.69L654.01,566.40L657.45,558.66L661.75,555.80L674.65,555.80L678.95,557.52L686.11,557.52L690.41,558.37L694.71,558.09L699.87,556.37L703.31,557.23L709.04,559.81L716.21,558.95L723.37,559.81L730.54,560.38L734.26,566.11L739.13,560.95L744.29,555.80L747.73,560.09L754.90,557.52L759.20,558.37L761.49,557.52L766.36,559.81L770.66,564.39L772.67,568.12L773.67,568.50L896.80,568.50"/><path stroke="#FF780A" d="M311.00,568.50L588.16,568.50L588.66,568.69L590.95,571.56L592.96,573.57L597.26,575.86L602.99,576.43L608.72,578.15L617.32,578.72L630.22,579.58L634.52,581.02L641.69,581.59L654.01,581.59L655.44,615.98L657.45,660.41L660.89,678.18L663.75,676.17L668.91,679.90L674.65,681.91L676.08,681.33L682.67,665.57L684.96,668.44L688.40,660.41L691.84,658.98L694.71,659.84L699.29,681.33L702.16,676.17L706.75,636.91L709.61,635.19L713.34,638.05L716.49,630.32L719.93,644.65L723.37,628.88L727.67,630.32L730.54,636.05L734.26,581.59L739.13,627.45L744.29,682.48L747.45,634.61L754.33,670.44L759.20,656.68L761.49,656.11L764.93,643.21L768.37,621.72L770.66,595.92L772.67,568.69L773.67,569.40L896.80,569.40"/><path stroke="#5794F2" d="M311.0,568.5H896.8"/></g></svg>
<div class="lm" style="left:15.0px;top:730.3px;background:#73BF69"></div>
<div class="lm" style="left:102.1px;top:730.3px;background:#F2CC0C"></div>
<div class="lm" style="left:173.2px;top:730.3px;background:#8AB8FF"></div>
<div class="lm" style="left:268.0px;top:730.3px;background:#FF780A"></div>
<div class="lm" style="left:359.3px;top:730.3px;background:#F2495C"></div>
<div class="lm" style="left:434.0px;top:730.3px;background:#5794F2"></div>
<svg class="ov" width="1828" height="743" viewBox="0 0 1828 743"><g stroke="rgba(240,250,255,0.09)" stroke-width="1" shape-rendering="crispEdges"><path d="M1038.5,541.0V700.7"/><path d="M1108.5,541.0V700.7"/><path d="M1179.5,541.0V700.7"/><path d="M1250.5,541.0V700.7"/><path d="M1320.5,541.0V700.7"/><path d="M1391.5,541.0V700.7"/><path d="M1461.5,541.0V700.7"/><path d="M1532.5,541.0V700.7"/><path d="M1602.5,541.0V700.7"/><path d="M1673.5,541.0V700.7"/><path d="M1743.5,541.0V700.7"/><path d="M1814.5,541.0V700.7"/><path d="M973.8,541.5H1819.7"/><path d="M973.8,572.5H1819.7"/><path d="M973.8,603.5H1819.7"/><path d="M973.8,634.5H1819.7"/><path d="M973.8,665.5H1819.7"/><path d="M973.8,696.5H1819.7"/></g><g fill-opacity="0.4" stroke="none"><path fill="#73BF69" d="M1218.60,612.50L1817.60,612.50L1817.60,696.10L1218.60,696.10Z"/><path fill="#F2CC0C" d="M1218.60,666.50L1366.50,666.50L1369.50,667.50L1817.60,667.50L1817.60,696.10L1218.60,696.10Z"/></g><g fill="none" stroke-width="1"><path stroke="#73BF69" d="M1218.60,612.50L1817.60,612.50"/><path stroke="#F2CC0C" d="M1218.60,666.50L1366.50,666.50L1369.50,667.50L1817.60,667.50"/><path stroke="#F2495C" d="M1218.6,695.5H1817.6"/><path stroke="#5794F2" d="M1218.6,696.5H1817.6"/></g></svg>
<div class="lm" style="left:935.9px;top:730.3px;background:#73BF69"></div>
<div class="lm" style="left:1054.8px;top:730.3px;background:#F2CC0C"></div>
<div class="lm" style="left:1091.0px;top:730.3px;background:#8AB8FF"></div>
<div class="lm" style="left:1146.9px;top:730.3px;background:#FF780A"></div>
<div class="lm" style="left:1231.0px;top:730.3px;background:#F2495C"></div>
<div class="lm" style="left:1344.0px;top:730.3px;background:#5794F2"></div>
<div class="gl">
<span class="t " style="left:15.41px;top:82px;font-size:12.60px;line-height:14px;color:rgb(204,204,220);letter-spacing:-0.195px;-webkit-text-stroke:0.4px rgb(204,204,220);">CPU</span>
<span class="t " style="left:177.76px;top:82px;font-size:12.60px;line-height:14px;color:#73BF69;letter-spacing:-0.693px;-webkit-text-stroke:0.3px #73BF69;">0.2%</span>
<span class="t " style="left:12.12px;top:117px;font-size:12.60px;line-height:14px;color:rgb(204,204,220);letter-spacing:0.682px;-webkit-text-stroke:0.4px rgb(204,204,220);">Mem</span>
<span class="t " style="left:177.76px;top:117px;font-size:12.60px;line-height:14px;color:#73BF69;letter-spacing:-0.693px;-webkit-text-stroke:0.3px #73BF69;">0.0%</span>
<span class="t " style="left:23.79px;top:151px;font-size:12.60px;line-height:14px;color:rgb(204,204,220);letter-spacing:0.332px;-webkit-text-stroke:0.4px rgb(204,204,220);">I/O</span>
<span class="t " style="left:177.76px;top:151px;font-size:12.60px;line-height:14px;color:#73BF69;letter-spacing:-0.693px;-webkit-text-stroke:0.3px #73BF69;">0.0%</span>
<span class="t " style="left:314.92px;top:141px;font-size:22.50px;line-height:25px;color:rgb(52,174,47);letter-spacing:1.316px;-webkit-text-stroke:0.6px rgb(52,174,47);">2.5%</span>
<span class="t " style="left:545.25px;top:141px;font-size:22.50px;line-height:25px;color:rgb(52,174,47);letter-spacing:1.206px;-webkit-text-stroke:0.6px rgb(52,174,47);">5.0%</span>
<span class="t " style="left:773.61px;top:142px;font-size:18.90px;line-height:21px;color:rgb(52,174,47);letter-spacing:0.831px;-webkit-text-stroke:0.6px rgb(52,174,47);">10.4%</span>
<span class="t " style="left:1007.24px;top:137px;font-size:28.20px;line-height:32px;color:rgb(52,174,47);letter-spacing:2.630px;-webkit-text-stroke:0.9px rgb(52,174,47);">N/A</span>
<span class="t " style="left:1234.41px;top:141px;font-size:18.90px;line-height:21px;color:rgb(52,174,47);letter-spacing:0.881px;-webkit-text-stroke:0.6px rgb(52,174,47);">18.9%</span>
<span class="t " style="left:14.19px;top:268px;font-size:12.60px;line-height:14px;color:rgb(204,204,220);letter-spacing:-0.172px;-webkit-text-stroke:0.3px rgb(204,204,220);">100%</span>
<span class="t " style="left:19.70px;top:299px;font-size:12.60px;line-height:14px;color:rgb(204,204,220);letter-spacing:0.489px;-webkit-text-stroke:0.3px rgb(204,204,220);">80%</span>
<span class="t " style="left:19.61px;top:330px;font-size:12.60px;line-height:14px;color:rgb(204,204,220);letter-spacing:0.535px;-webkit-text-stroke:0.3px rgb(204,204,220);">60%</span>
<span class="t " style="left:19.96px;top:361px;font-size:12.60px;line-height:14px;color:rgb(204,204,220);letter-spacing:0.360px;-webkit-text-stroke:0.3px rgb(204,204,220);">40%</span>
<span class="t " style="left:19.62px;top:392px;font-size:12.60px;line-height:14px;color:rgb(204,204,220);letter-spacing:0.532px;-webkit-text-stroke:0.3px rgb(204,204,220);">20%</span>
<span class="t " style="left:27.56px;top:423px;font-size:12.60px;line-height:14px;color:rgb(204,204,220);letter-spacing:0.130px;-webkit-text-stroke:0.3px rgb(204,204,220);">0%</span>
<span class="t " style="left:102.16px;top:438px;font-size:12.60px;line-height:14px;color:rgb(204,204,220);letter-spacing:-0.162px;-webkit-text-stroke:0.3px rgb(204,204,220);">09:10</span>
<span class="t " style="left:172.76px;top:438px;font-size:12.60px;line-height:14px;color:rgb(204,204,220);letter-spacing:-0.152px;-webkit-text-stroke:0.3px rgb(204,204,220);">09:15</span>
<span class="t " style="left:242.01px;top:438px;font-size:12.60px;line-height:14px;color:rgb(204,204,220);letter-spacing:0.513px;-webkit-text-stroke:0.3px rgb(204,204,220);">09:20</span>
<span class="t " style="left:312.61px;top:438px;font-size:12.60px;line-height:14px;color:rgb(204,204,220);letter-spacing:0.523px;-webkit-text-stroke:0.3px rgb(204,204,220);">09:25</span>
<span class="t " style="left:383.21px;top:438px;font-size:12.60px;line-height:14px;color:rgb(204,204,220);letter-spacing:0.513px;-webkit-text-stroke:0.3px rgb(204,204,220);">09:30</span>
<span class="t " style="left:453.81px;top:438px;font-size:12.60px;line-height:14px;color:rgb(204,204,220);letter-spacing:0.523px;-webkit-text-stroke:0.3px rgb(204,204,220);">09:35</span>
<span class="t " style="left:524.41px;top:438px;font-size:12.60px;line-height:14px;color:rgb(204,204,220);letter-spacing:0.513px;-webkit-text-stroke:0.3px rgb(204,204,220);">09:40</span>
<span class="t " style="left:595.01px;top:438px;font-size:12.60px;line-height:14px;color:rgb(204,204,220);letter-spacing:0.523px;-webkit-text-stroke:0.3px rgb(204,204,220);">09:45</span>
<span class="t " style="left:665.61px;top:438px;font-size:12.60px;line-height:14px;color:rgb(204,204,220);letter-spacing:0.513px;-webkit-text-stroke:0.3px rgb(204,204,220);">09:50</span>
<span class="t " style="left:736.21px;top:438px;font-size:12.60px;line-height:14px;color:rgb(204,204,220);letter-spacing:0.523px;-webkit-text-stroke:0.3px rgb(204,204,220);">09:55</span>
<span class="t " style="left:807.69px;top:438px;font-size:12.60px;line-height:14px;color:rgb(204,204,220);letter-spacing:-0.045px;-webkit-text-stroke:0.3px rgb(204,204,220);">10:00</span>
<span class="t " style="left:878.29px;top:438px;font-size:12.60px;line-height:14px;color:rgb(204,204,220);letter-spacing:-0.035px;width:28.1px;overflow:hidden;-webkit-text-stroke:0.3px rgb(204,204,220);">10:05</span>
<span class="t " style="left:36.52px;top:458px;font-size:12.60px;line-height:14px;color:rgb(204,204,220);letter-spacing:0.194px;-webkit-text-stroke:0.3px rgb(204,204,220);">Busy System</span>
<span class="t " style="left:143.82px;top:458px;font-size:12.60px;line-height:14px;color:rgb(204,204,220);letter-spacing:0.078px;-webkit-text-stroke:0.3px rgb(204,204,220);">Busy User</span>
<span class="t " style="left:235.12px;top:458px;font-size:12.60px;line-height:14px;color:rgb(204,204,220);letter-spacing:0.140px;-webkit-text-stroke:0.3px rgb(204,204,220);">Busy Iowait</span>
<span class="t " style="left:333.52px;top:458px;font-size:12.60px;line-height:14px;color:rgb(204,204,220);letter-spacing:-0.166px;-webkit-text-stroke:0.3px rgb(204,204,220);">Busy IRQs</span>
<span class="t " style="left:424.62px;top:458px;font-size:12.60px;line-height:14px;color:rgb(204,204,220);letter-spacing:0.124px;-webkit-text-stroke:0.3px rgb(204,204,220);">Busy Other</span>
<span class="t " style="left:520.49px;top:458px;font-size:12.60px;line-height:14px;color:rgb(204,204,220);letter-spacing:0.336px;-webkit-text-stroke:0.3px rgb(204,204,220);">Idle</span>
<span class="t " style="left:936.06px;top:272px;font-size:12.60px;line-height:14px;color:rgb(204,204,220);letter-spacing:-0.140px;-webkit-text-stroke:0.3px rgb(204,204,220);">4 GiB</span>
<span class="t " style="left:935.87px;top:310px;font-size:12.60px;line-height:14px;color:rgb(204,204,220);letter-spacing:-0.092px;-webkit-text-stroke:0.3px rgb(204,204,220);">3 GiB</span>
<span class="t " style="left:935.72px;top:347px;font-size:12.60px;line-height:14px;color:rgb(204,204,220);letter-spacing:-0.054px;-webkit-text-stroke:0.3px rgb(204,204,220);">2 GiB</span>
<span class="t " style="left:937.29px;top:385px;font-size:12.60px;line-height:14px;color:rgb(204,204,220);letter-spacing:-0.447px;-webkit-text-stroke:0.3px rgb(204,204,220);">1 GiB</span>
<span class="t " style="left:948.26px;top:423px;font-size:12.60px;line-height:14px;color:rgb(204,204,220);letter-spacing:-0.078px;-webkit-text-stroke:0.3px rgb(204,204,220);">0 B</span>
<span class="t " style="left:1022.16px;top:438px;font-size:12.60px;line-height:14px;color:rgb(204,204,220);letter-spacing:-0.162px;-webkit-text-stroke:0.3px rgb(204,204,220);">09:10</span>
<span class="t " style="left:1092.78px;top:438px;font-size:12.60px;line-height:14px;color:rgb(204,204,220);letter-spacing:-0.152px;-webkit-text-stroke:0.3px rgb(204,204,220);">09:15</span>
<span class="t " style="left:1162.05px;top:438px;font-size:12.60px;line-height:14px;color:rgb(204,204,220);letter-spacing:0.513px;-webkit-text-stroke:0.3px rgb(204,204,220);">09:20</span>
<span class="t " style="left:1232.67px;top:438px;font-size:12.60px;line-height:14px;color:rgb(204,204,220);letter-spacing:0.523px;-webkit-text-stroke:0.3px rgb(204,204,220);">09:25</span>
<span class="t " style="left:1303.29px;top:438px;font-size:12.60px;line-height:14px;color:rgb(204,204,220);letter-spacing:0.513px;-webkit-text-stroke:0.3px rgb(204,204,220);">09:30</span>
<span class="t " style="left:1373.91px;top:438px;font-size:12.60px;line-height:14px;color:rgb(204,204,220);letter-spacing:0.523px;-webkit-text-stroke:0.3px rgb(204,204,220);">09:35</span>
<span class="t " style="left:1444.53px;top:438px;font-size:12.60px;line-height:14px;color:rgb(204,204,220);letter-spacing:0.513px;-webkit-text-stroke:0.3px rgb(204,204,220);">09:40</span>
<span class="t " style="left:1515.15px;top:438px;font-size:12.60px;line-height:14px;color:rgb(204,204,220);letter-spacing:0.523px;-webkit-text-stroke:0.3px rgb(204,204,220);">09:45</span>
<span class="t " style="left:1585.77px;top:438px;font-size:12.60px;line-height:14px;color:rgb(204,204,220);letter-spacing:0.513px;-webkit-text-stroke:0.3px rgb(204,204,220);">09:50</span>
<span class="t " style="left:1656.39px;top:438px;font-size:12.60px;line-height:14px;color:rgb(204,204,220);letter-spacing:0.523px;-webkit-text-stroke:0.3px rgb(204,204,220);">09:55</span>
<span class="t " style="left:1727.89px;top:438px;font-size:12.60px;line-height:14px;color:rgb(204,204,220);letter-spacing:-0.045px;-webkit-text-stroke:0.3px rgb(204,204,220);">10:00</span>
<span class="t " style="left:1798.51px;top:438px;font-size:12.60px;line-height:14px;color:rgb(204,204,220);letter-spacing:-0.035px;width:28.6px;overflow:hidden;-webkit-text-stroke:0.3px rgb(204,204,220);">10:05</span>
<span class="t " style="left:957.92px;top:458px;font-size:12.60px;line-height:14px;color:rgb(204,204,220);letter-spacing:-0.017px;-webkit-text-stroke:0.3px rgb(204,204,220);">RAM Total</span>
<span class="t " style="left:1048.82px;top:458px;font-size:12.60px;line-height:14px;color:rgb(204,204,220);letter-spacing:0.062px;-webkit-text-stroke:0.3px rgb(204,204,220);">RAM Used</span>
<span class="t " style="left:1141.92px;top:458px;font-size:12.60px;line-height:14px;color:rgb(204,204,220);letter-spacing:0.103px;-webkit-text-stroke:0.3px rgb(204,204,220);">RAM Cache + Buffer</span>
<span class="t " style="left:1291.82px;top:458px;font-size:12.60px;line-height:14px;color:rgb(204,204,220);letter-spacing:-0.145px;-webkit-text-stroke:0.3px rgb(204,204,220);">RAM Free</span>
<span class="t " style="left:1380.68px;top:458px;font-size:12.60px;line-height:14px;color:rgb(204,204,220);letter-spacing:-0.142px;-webkit-text-stroke:0.3px rgb(204,204,220);">SWAP Used</span>
<span class="t " style="left:31.26px;top:561px;font-size:12.60px;line-height:14px;color:rgb(204,204,220);letter-spacing:0.583px;-webkit-text-stroke:0.3px rgb(204,204,220);">0 b/s</span>
<span class="t " style="left:15.59px;top:597px;font-size:12.60px;line-height:14px;color:rgb(204,204,220);letter-spacing:0.551px;-webkit-text-stroke:0.3px rgb(204,204,220);">-2 Mb/s</span>
<span class="t " style="left:14.99px;top:633px;font-size:12.60px;line-height:14px;color:rgb(204,204,220);letter-spacing:0.651px;-webkit-text-stroke:0.3px rgb(204,204,220);">-4 Mb/s</span>
<span class="t " style="left:14.99px;top:669px;font-size:12.60px;line-height:14px;color:rgb(204,204,220);letter-spacing:0.651px;-webkit-text-stroke:0.3px rgb(204,204,220);">-6 Mb/s</span>
<span class="t " style="left:115.06px;top:704px;font-size:12.60px;line-height:14px;color:rgb(204,204,220);letter-spacing:-0.162px;-webkit-text-stroke:0.3px rgb(204,204,220);">09:10</span>
<span class="t " style="left:184.46px;top:704px;font-size:12.60px;line-height:14px;color:rgb(204,204,220);letter-spacing:-0.152px;-webkit-text-stroke:0.3px rgb(204,204,220);">09:15</span>
<span class="t " style="left:252.51px;top:704px;font-size:12.60px;line-height:14px;color:rgb(204,204,220);letter-spacing:0.513px;-webkit-text-stroke:0.3px rgb(204,204,220);">09:20</span>
<span class="t " style="left:321.91px;top:704px;font-size:12.60px;line-height:14px;color:rgb(204,204,220);letter-spacing:0.523px;-webkit-text-stroke:0.3px rgb(204,204,220);">09:25</span>
<span class="t " style="left:391.31px;top:704px;font-size:12.60px;line-height:14px;color:rgb(204,204,220);letter-spacing:0.513px;-webkit-text-stroke:0.3px rgb(204,204,220);">09:30</span>
<span class="t " style="left:460.71px;top:704px;font-size:12.60px;line-height:14px;color:rgb(204,204,220);letter-spacing:0.523px;-webkit-text-stroke:0.3px rgb(204,204,220);">09:35</span>
<span class="t " style="left:530.11px;top:704px;font-size:12.60px;line-height:14px;color:rgb(204,204,220);letter-spacing:0.513px;-webkit-text-stroke:0.3px rgb(204,204,220);">09:40</span>
<span class="t " style="left:599.51px;top:704px;font-size:12.60px;line-height:14px;color:rgb(204,204,220);letter-spacing:0.523px;-webkit-text-stroke:0.3px rgb(204,204,220);">09:45</span>
<span class="t " style="left:668.91px;top:704px;font-size:12.60px;line-height:14px;color:rgb(204,204,220);letter-spacing:0.513px;-webkit-text-stroke:0.3px rgb(204,204,220);">09:50</span>
<span class="t " style="left:738.31px;top:704px;font-size:12.60px;line-height:14px;color:rgb(204,204,220);letter-spacing:0.523px;-webkit-text-stroke:0.3px rgb(204,204,220);">09:55</span>
<span class="t " style="left:808.59px;top:704px;font-size:12.60px;line-height:14px;color:rgb(204,204,220);letter-spacing:-0.045px;-webkit-text-stroke:0.3px rgb(204,204,220);">10:00</span>
<span class="t " style="left:877.99px;top:704px;font-size:12.60px;line-height:14px;color:rgb(204,204,220);letter-spacing:-0.035px;width:28.4px;overflow:hidden;-webkit-text-stroke:0.3px rgb(204,204,220);">10:05</span>
<span class="t " style="left:36.71px;top:724px;font-size:12.60px;line-height:14px;color:rgb(204,204,220);letter-spacing:0.363px;-webkit-text-stroke:0.3px rgb(204,204,220);">recv eth0</span>
<span class="t " style="left:123.71px;top:724px;font-size:12.60px;line-height:14px;color:rgb(204,204,220);letter-spacing:0.259px;-webkit-text-stroke:0.3px rgb(204,204,220);">recv lo</span>
<span class="t " style="left:194.91px;top:724px;font-size:12.60px;line-height:14px;color:rgb(204,204,220);letter-spacing:0.345px;-webkit-text-stroke:0.3px rgb(204,204,220);">recv wlan0</span>
<span class="t " style="left:290.76px;top:724px;font-size:12.60px;line-height:14px;color:rgb(204,204,220);letter-spacing:0.239px;-webkit-text-stroke:0.3px rgb(204,204,220);">trans eth0</span>
<span class="t " style="left:381.86px;top:724px;font-size:12.60px;line-height:14px;color:rgb(204,204,220);letter-spacing:0.143px;-webkit-text-stroke:0.3px rgb(204,204,220);">trans lo</span>
<span class="t " style="left:456.76px;top:724px;font-size:12.60px;line-height:14px;color:rgb(204,204,220);letter-spacing:0.255px;-webkit-text-stroke:0.3px rgb(204,204,220);">trans wlan0</span>
<span class="t " style="left:935.29px;top:534px;font-size:12.60px;line-height:14px;color:rgb(204,204,220);letter-spacing:-0.172px;-webkit-text-stroke:0.3px rgb(204,204,220);">100%</span>
<span class="t " style="left:940.80px;top:565px;font-size:12.60px;line-height:14px;color:rgb(204,204,220);letter-spacing:0.489px;-webkit-text-stroke:0.3px rgb(204,204,220);">80%</span>
<span class="t " style="left:940.71px;top:596px;font-size:12.60px;line-height:14px;color:rgb(204,204,220);letter-spacing:0.535px;-webkit-text-stroke:0.3px rgb(204,204,220);">60%</span>
<span class="t " style="left:941.06px;top:627px;font-size:12.60px;line-height:14px;color:rgb(204,204,220);letter-spacing:0.360px;-webkit-text-stroke:0.3px rgb(204,204,220);">40%</span>
<span class="t " style="left:940.72px;top:658px;font-size:12.60px;line-height:14px;color:rgb(204,204,220);letter-spacing:0.532px;-webkit-text-stroke:0.3px rgb(204,204,220);">20%</span>
<span class="t " style="left:948.66px;top:689px;font-size:12.60px;line-height:14px;color:rgb(204,204,220);letter-spacing:0.130px;-webkit-text-stroke:0.3px rgb(204,204,220);">0%</span>
<span class="t " style="left:1023.06px;top:704px;font-size:12.60px;line-height:14px;color:rgb(204,204,220);letter-spacing:-0.162px;-webkit-text-stroke:0.3px rgb(204,204,220);">09:10</span>
<span class="t " style="left:1093.60px;top:704px;font-size:12.60px;line-height:14px;color:rgb(204,204,220);letter-spacing:-0.152px;-webkit-text-stroke:0.3px rgb(204,204,220);">09:15</span>
<span class="t " style="left:1162.80px;top:704px;font-size:12.60px;line-height:14px;color:rgb(204,204,220);letter-spacing:0.513px;-webkit-text-stroke:0.3px rgb(204,204,220);">09:20</span>
<span class="t " style="left:1233.34px;top:704px;font-size:12.60px;line-height:14px;color:rgb(204,204,220);letter-spacing:0.523px;-webkit-text-stroke:0.3px rgb(204,204,220);">09:25</span>
<span class="t " style="left:1303.89px;top:704px;font-size:12.60px;line-height:14px;color:rgb(204,204,220);letter-spacing:0.513px;-webkit-text-stroke:0.3px rgb(204,204,220);">09:30</span>
<span class="t " style="left:1374.43px;top:704px;font-size:12.60px;line-height:14px;color:rgb(204,204,220);letter-spacing:0.523px;-webkit-text-stroke:0.3px rgb(204,204,220);">09:35</span>
<span class="t " style="left:1444.98px;top:704px;font-size:12.60px;line-height:14px;color:rgb(204,204,220);letter-spacing:0.513px;-webkit-text-stroke:0.3px rgb(204,204,220);">09:40</span>
<span class="t " style="left:1515.52px;top:704px;font-size:12.60px;line-height:14px;color:rgb(204,204,220);letter-spacing:0.523px;-webkit-text-stroke:0.3px rgb(204,204,220);">09:45</span>
<span class="t " style="left:1586.07px;top:704px;font-size:12.60px;line-height:14px;color:rgb(204,204,220);letter-spacing:0.513px;-webkit-text-stroke:0.3px rgb(204,204,220);">09:50</span>
<span class="t " style="left:1656.61px;top:704px;font-size:12.60px;line-height:14px;color:rgb(204,204,220);letter-spacing:0.523px;-webkit-text-stroke:0.3px rgb(204,204,220);">09:55</span>
<span class="t " style="left:1728.04px;top:704px;font-size:12.60px;line-height:14px;color:rgb(204,204,220);letter-spacing:-0.045px;-webkit-text-stroke:0.3px rgb(204,204,220);">10:00</span>
<span class="t " style="left:1798.59px;top:704px;font-size:12.60px;line-height:14px;color:rgb(204,204,220);letter-spacing:-0.035px;width:28.6px;overflow:hidden;-webkit-text-stroke:0.3px rgb(204,204,220);">10:05</span>
<span class="t " style="left:958.95px;top:724px;font-size:12.60px;line-height:14px;color:rgb(204,204,220);letter-spacing:0.441px;-webkit-text-stroke:0.3px rgb(204,204,220);">/boot/firmware</span>
<span class="t " style="left:1077.45px;top:724px;font-size:12.60px;line-height:14px;color:rgb(204,204,220);-webkit-text-stroke:0.3px rgb(204,204,220);">/</span>
<span class="t " style="left:1113.75px;top:724px;font-size:12.60px;line-height:14px;color:rgb(204,204,220);letter-spacing:0.469px;-webkit-text-stroke:0.3px rgb(204,204,220);">/run</span>
<span class="t " style="left:1169.15px;top:724px;font-size:12.60px;line-height:14px;color:rgb(204,204,220);letter-spacing:0.395px;-webkit-text-stroke:0.3px rgb(204,204,220);">/run/lock</span>
<span class="t " style="left:1253.65px;top:724px;font-size:12.60px;line-height:14px;color:rgb(204,204,220);letter-spacing:0.342px;-webkit-text-stroke:0.3px rgb(204,204,220);">/run/snapd/ns</span>
<span class="t " style="left:1366.95px;top:724px;font-size:12.60px;line-height:14px;color:rgb(204,204,220);letter-spacing:0.406px;-webkit-text-stroke:0.3px rgb(204,204,220);">/run/user/0</span>
</div>
</body></html>
